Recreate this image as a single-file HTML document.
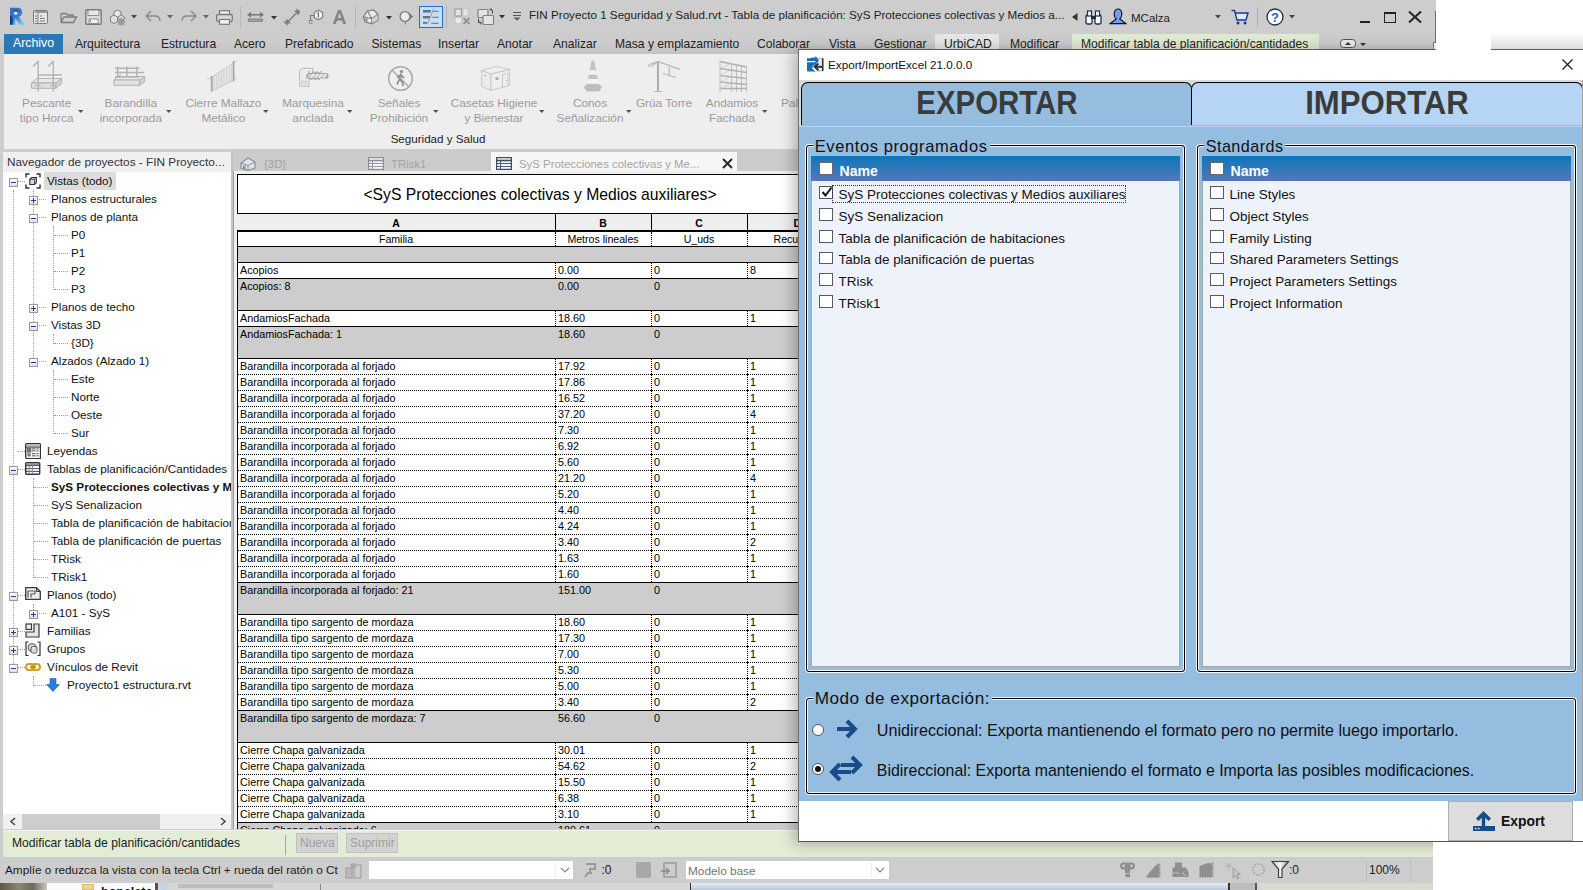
<!DOCTYPE html>
<html><head><meta charset="utf-8"><title>Revit - Export/ImportExcel</title>
<style>
html,body{margin:0;padding:0;}
body{width:1583px;height:890px;overflow:hidden;position:relative;background:#fff;font-family:"Liberation Sans",sans-serif;}
body div{position:absolute;box-sizing:border-box;}
.t{white-space:nowrap;}
</style></head><body>

<div style="left:0px;top:0px;width:1436px;height:884px;background:#cdcdcd;"></div>
<svg style="position:absolute;left:9px;top:7px;" width="17" height="19" viewBox="0 0 17 19"><defs><linearGradient id="rg" x1="0" y1="0" x2="0.6" y2="1"><stop offset="0" stop-color="#2a70c8"/><stop offset="0.55" stop-color="#2f78cc"/><stop offset="1" stop-color="#6cc4ee"/></linearGradient></defs><path d="M1 0.7 H8.8 C12 0.7 13 3 13 5.4 C13 7.8 11.8 9.2 10 9.8 L15.8 17.8 H10.3 L6.2 11.2 V17.8 H1 Z" fill="url(#rg)"/><path d="M1 8 L3.6 10.5 V17.8 H1 Z" fill="#1c3a7e"/><circle cx="6.7" cy="6" r="2" fill="#d8d8d8"/><path d="M4.8 4.6 C5.6 3.6 8 3.4 8.8 4.6" stroke="#1c2f66" stroke-width="1.2" fill="none"/></svg>
<svg style="position:absolute;left:33px;top:10px;" width="15" height="14" viewBox="0 0 15 14"><rect x="0.5" y="0.5" width="14" height="13" rx="1" fill="#e6e6e6" stroke="#7a7a7a"/><rect x="1" y="1" width="13" height="2" fill="#9a9a9a"/><rect x="1.5" y="1.2" width="1.5" height="1.5" fill="#bde"/><path d="M5 3 V13" stroke="#7a7a7a"/><path d="M2 6h2M2 8.5h2M2 11h2M7 6h2M7 8.5h5M7 11h5" stroke="#7a7a7a"/></svg>
<svg style="position:absolute;left:60px;top:11px;" width="18" height="13" viewBox="0 0 18 13"><path d="M1 2.5 V11.5 L4 6 H16.5 L13.5 11.5 H1 M1 2.5 H6 L7.5 4 H13 V6" fill="none" stroke="#7a7a7a" stroke-width="1.3"/></svg>
<svg style="position:absolute;left:85px;top:9px;" width="17" height="16" viewBox="0 0 17 16"><rect x="0.8" y="0.8" width="15.4" height="14.4" rx="1" fill="#dcdcdc" stroke="#7a7a7a" stroke-width="1.4"/><rect x="3" y="1" width="11" height="5.5" fill="#e8e8e8" stroke="#7a7a7a" stroke-width="0.8"/><rect x="4" y="10" width="9" height="4.5" fill="#f2f2f2" stroke="#7a7a7a" stroke-width="0.8"/><rect x="5" y="11" width="1" height="2" fill="#7a7a7a"/></svg>
<svg style="position:absolute;left:109px;top:9px;" width="17" height="17" viewBox="0 0 17 17"><path d="M5 3 L8.5 1 L12 3 V7 L8.5 9 L5 7 Z" fill="#e8e8e8" stroke="#7c7c7c" stroke-width="1"/><path d="M1.5 8 L5 6 L8.5 8 V12.5 L5 14.5 L1.5 12.5 Z" fill="#e0e0e0" stroke="#7c7c7c" stroke-width="1"/><path d="M8.5 8 L12 6 L15.5 8 V10" fill="#e0e0e0" stroke="#7c7c7c" stroke-width="1"/><circle cx="12.3" cy="12.8" r="3.3" fill="#9a9a9a"/><circle cx="12.3" cy="12.8" r="1.2" fill="#cfcfcf"/><path d="M12.3 8.6 V17 M8.1 12.8 H16.5 M9.3 9.8 L15.3 15.8 M15.3 9.8 L9.3 15.8" stroke="#9a9a9a" stroke-width="1.1"/></svg>
<svg style="position:absolute;left:131px;top:15px;" width="7" height="4" viewBox="0 0 7 4"><path d="M0 0 H6 L3 3.5 Z" fill="#444"/></svg>
<svg style="position:absolute;left:145px;top:10px;" width="16" height="13" viewBox="0 0 16 13"><path d="M6 1 L1 6 L6 11 M1.5 6 H10 C13 6 15 8 15 11" fill="none" stroke="#8a8a8a" stroke-width="1.4"/></svg>
<svg style="position:absolute;left:167px;top:15px;" width="7" height="4" viewBox="0 0 7 4"><path d="M0 0 H6 L3 3.5 Z" fill="#666"/></svg>
<svg style="position:absolute;left:181px;top:10px;" width="16" height="13" viewBox="0 0 16 13"><path d="M10 1 L15 6 L10 11 M14.5 6 H6 C3 6 1 8 1 11" fill="none" stroke="#8a8a8a" stroke-width="1.4"/></svg>
<svg style="position:absolute;left:203px;top:15px;" width="7" height="4" viewBox="0 0 7 4"><path d="M0 0 H6 L3 3.5 Z" fill="#666"/></svg>
<svg style="position:absolute;left:216px;top:10px;" width="17" height="15" viewBox="0 0 17 15"><rect x="3.5" y="0.7" width="10" height="4" fill="#eee" stroke="#7a7a7a" stroke-width="1.2"/><rect x="0.7" y="4.5" width="15.6" height="7" rx="1.5" fill="#d8d8d8" stroke="#7a7a7a" stroke-width="1.3"/><rect x="3.5" y="9.5" width="10" height="4.8" fill="#f2f2f2" stroke="#7a7a7a" stroke-width="1.2"/></svg>
<div style="left:240px;top:6px;width:1px;height:22px;background:#b8b8b8;"></div>
<svg style="position:absolute;left:246px;top:9px;" width="20" height="15" viewBox="0 0 20 15"><path d="M2.5 5.8 H16.5" stroke="#7c7c7c" stroke-width="1.6"/><path d="M1 5.8 L5 2.8 V8.8 Z M18 5.8 L14 2.8 V8.8 Z" fill="#7c7c7c"/><rect x="1.8" y="9.6" width="15.2" height="3.3" rx="0.8" fill="#8a8a8a"/><path d="M3.5 11.3 H15.5" stroke="#d8d8d8" stroke-width="0.9" stroke-dasharray="1 1"/></svg>
<svg style="position:absolute;left:271px;top:16px;" width="7" height="4" viewBox="0 0 7 4"><path d="M0 0 H6 L3 3.5 Z" fill="#333"/></svg>
<svg style="position:absolute;left:283px;top:8px;" width="18" height="18" viewBox="0 0 18 18"><path d="M4 14.5 L15 3.5" stroke="#7c7c7c" stroke-width="1.5"/><path d="M2.5 16 L3.2 10.5 L8 15.3 Z M16.5 2 L15.8 7.5 L11 2.7 Z" fill="#7c7c7c"/><path d="M0.8 13.3 L4.8 17.2 M13.3 0.8 L17.2 4.8" stroke="#7c7c7c" stroke-width="1.1"/></svg>
<svg style="position:absolute;left:308px;top:9px;" width="16" height="15" viewBox="0 0 16 15"><path d="M10.4 1.2 L14.6 3.6 V8.4 L10.4 10.8 L6.2 8.4 V3.6 Z" fill="#f2f2f2" stroke="#7c7c7c" stroke-width="1.1"/><path d="M10.4 3.4 V8.6 M9.3 4.4 L10.4 3.4" stroke="#555" stroke-width="1"/><path d="M6.2 6.5 H2.5 V11.5" fill="none" stroke="#7c7c7c" stroke-width="1.1"/><rect x="1.3" y="11.5" width="2.6" height="2.6" fill="#f2f2f2" stroke="#7c7c7c" stroke-width="0.9"/></svg>
<svg style="position:absolute;left:332px;top:9px;" width="15" height="16" viewBox="0 0 15 16"><path d="M0.8 15 L6 1 H9 L14.2 15 H11.2 L10 11.5 H5 L3.8 15 Z M5.8 9 H9.2 L7.5 3.8 Z" fill="#858585"/></svg>
<div style="left:355px;top:6px;width:1px;height:22px;background:#b8b8b8;"></div>
<svg style="position:absolute;left:362px;top:9px;" width="17" height="16" viewBox="0 0 17 16"><path d="M1.2 7.8 L5.5 2 L11.5 0.8 L16 5.2 V11.5 L9.8 14.8 L3.2 12.8 Z" fill="#e8e8e8" stroke="#7c7c7c" stroke-width="1.2"/><path d="M1.2 7.8 L9.8 9.6 L16 5.2 M5.5 2 L9.8 9.6 V14.8" fill="none" stroke="#7c7c7c" stroke-width="1.1"/><path d="M3.2 9 V12.8 L5.6 13.4 V9.6 Z" fill="#9a9a9a"/><path d="M10.3 10 L15.5 6 V11.2 L10.3 14 Z" fill="#cfcfcf"/></svg>
<svg style="position:absolute;left:386px;top:16px;" width="7" height="4" viewBox="0 0 7 4"><path d="M0 0 H6 L3 3.5 Z" fill="#333"/></svg>
<svg style="position:absolute;left:398px;top:9px;" width="16" height="16" viewBox="0 0 16 16"><path d="M11 3.8 L15.2 7.5 L11 11.2 Z" fill="#7c7c7c"/><circle cx="7" cy="7.5" r="4.9" fill="#ececec" stroke="#7c7c7c" stroke-width="1.3"/><path d="M7.3 12.5 V15.5" stroke="#7c7c7c" stroke-width="1.1"/></svg>
<div style="left:419px;top:6px;width:24px;height:22px;background:#c6def6;border:1.5px solid #1f6fd6;"></div>
<svg style="position:absolute;left:422px;top:8px;" width="18" height="17" viewBox="0 0 18 17"><path d="M1 2 H9 L8.5 4.6 H1 Z M1 8 H8 L7.5 10.4 H1 Z M1 14 H5 V15.8 H1 Z" fill="#65707e"/><path d="M11.3 3.2 H16.5 M10.3 9.2 H16.5 M9.3 15.2 H16.5" stroke="#65707e" stroke-width="1.1"/><path d="M5.5 16.5 L11.5 1" stroke="#8a93a0" stroke-width="0.9"/></svg>
<div style="left:446px;top:6px;width:1px;height:22px;background:#b8b8b8;"></div>
<svg style="position:absolute;left:454px;top:8px;" width="17" height="18" viewBox="0 0 17 18"><rect x="1" y="1" width="6.5" height="7" fill="#e4e4e4" stroke="#9a9a9a" stroke-width="1.1"/><rect x="9" y="1" width="5" height="7" fill="#e8e8e8" stroke="#c4c4c4" stroke-width="0.9"/><rect x="1" y="9.5" width="6.5" height="6" fill="#e8e8e8" stroke="#c4c4c4" stroke-width="0.9"/><path d="M9.5 10 L15.5 16 M15.5 10 L9.5 16" stroke="#8a8a8a" stroke-width="1.7"/></svg>
<svg style="position:absolute;left:477px;top:8px;" width="18" height="18" viewBox="0 0 18 18"><rect x="1" y="1.5" width="10" height="8" rx="1" fill="#e4e4e4" stroke="#808080" stroke-width="1.2"/><rect x="6" y="7.5" width="10.5" height="9" rx="1" fill="#e4e4e4" stroke="#808080" stroke-width="1.2"/><path d="M13.5 0.8 L15.5 2.8 V5.5 M12.5 2 L14.3 0.8 L14.8 2.8" fill="none" stroke="#444" stroke-width="1"/><path d="M1.5 11 V14.5 L4 15 M3 13.5 L4.5 15 L3 16.3" fill="none" stroke="#444" stroke-width="1"/></svg>
<svg style="position:absolute;left:499px;top:15px;" width="7" height="4" viewBox="0 0 7 4"><path d="M0 0 H6 L3 3.5 Z" fill="#333"/></svg>
<svg style="position:absolute;left:512px;top:11px;" width="10" height="10" viewBox="0 0 10 10"><path d="M1 1.5 H9 M1 4.5 H9" stroke="#555" stroke-width="1.2"/><path d="M1.5 6.5 H8.5 L5 9.5 Z" fill="#555"/></svg>
<div class="t" style="left:529px;top:7.98px;font-size:11.65px;line-height:14.56px;color:#222;font-weight:normal;">FIN Proyecto 1 Seguridad y Salud.rvt - Tabla de planificación: SyS Protecciones colectivas y Medios a...</div>
<svg style="position:absolute;left:1072px;top:13px;" width="6" height="8" viewBox="0 0 6 8"><path d="M5.5 0 V8 L0 4 Z" fill="#333"/></svg>
<svg style="position:absolute;left:1085px;top:10px;" width="17" height="15" viewBox="0 0 17 15"><rect x="1" y="5" width="6" height="9" rx="1.5" fill="#fff" stroke="#1a2a50" stroke-width="1.3"/><rect x="10" y="5" width="6" height="9" rx="1.5" fill="#fff" stroke="#1a2a50" stroke-width="1.3"/><rect x="2.5" y="1" width="4" height="5" fill="#fff" stroke="#1a2a50" stroke-width="1.2"/><rect x="10.5" y="1" width="4" height="5" fill="#fff" stroke="#1a2a50" stroke-width="1.2"/><rect x="6" y="6" width="5" height="3" fill="#1a2a50"/></svg>
<svg style="position:absolute;left:1109px;top:8px;" width="18" height="17" viewBox="0 0 18 17"><path d="M9 1 C11.8 1 12.8 3.5 12.8 6 C12.8 8.8 11.5 10.5 10.8 11 L16.8 15.6 H1.2 L7.2 11 C6.5 10.5 5.2 8.8 5.2 6 C5.2 3.5 6.2 1 9 1 Z" fill="#6f9ef2" stroke="#111" stroke-width="1.1"/></svg>
<div class="t" style="left:1131px;top:10.83px;font-size:11.5px;line-height:14.38px;color:#222;font-weight:normal;">MCalza</div>
<svg style="position:absolute;left:1215px;top:15px;" width="7" height="4" viewBox="0 0 7 4"><path d="M0 0 H6 L3 3.5 Z" fill="#444"/></svg>
<svg style="position:absolute;left:1231px;top:9px;" width="18" height="16" viewBox="0 0 18 16"><path d="M0.5 1.5 H3.5 L6 11 H15 L17 4 H4.5" fill="#dde8ff" stroke="#1a3a90" stroke-width="1.4"/><circle cx="7" cy="14" r="1.5" fill="#1a3a90"/><circle cx="14" cy="14" r="1.5" fill="#1a3a90"/></svg>
<div style="left:1257px;top:7px;width:1px;height:20px;background:#b0b0b0;"></div>
<svg style="position:absolute;left:1266px;top:8px;" width="18" height="18" viewBox="0 0 18 18"><circle cx="9" cy="9" r="8" fill="#fff" stroke="#1a2a50" stroke-width="1.3"/><text x="9" y="13.5" text-anchor="middle" font-size="13" font-weight="bold" fill="#2a5acc" font-family="Liberation Sans">?</text></svg>
<svg style="position:absolute;left:1289px;top:15px;" width="7" height="4" viewBox="0 0 7 4"><path d="M0 0 H6 L3 3.5 Z" fill="#444"/></svg>
<div style="left:1360px;top:21px;width:10px;height:2px;background:#222;"></div>
<div style="left:1384px;top:12px;width:12px;height:11px;border:1.5px solid #222;border-top-width:2px;"></div>
<svg style="position:absolute;left:1408px;top:11px;" width="14" height="12" viewBox="0 0 14 12"><path d="M1 0.5 L13 11.5 M13 0.5 L1 11.5" stroke="#222" stroke-width="2"/></svg>
<div style="left:0px;top:30px;width:1436px;height:24px;background:linear-gradient(#cdcdcd,#cccccc 50%,#c3c3c3);"></div>
<div style="left:4px;top:34px;width:59px;height:20px;background:#2b78b7;"></div>
<div class="t" style="left:13px;top:36.35px;font-size:12.3px;line-height:15.38px;color:#fff;font-weight:normal;">Archivo</div>
<div style="left:935px;top:34px;width:64px;height:20px;background:#e6e6e6;"></div>
<div style="left:1072px;top:34px;width:247px;height:20px;background:#dfead2;"></div>
<div class="t" style="left:75px;top:36.55px;font-size:12.1px;line-height:15.12px;color:#222;font-weight:normal;width:67.30000000000001px;">Arquitectura</div>
<div class="t" style="left:161px;top:36.55px;font-size:12.1px;line-height:15.12px;color:#222;font-weight:normal;width:54.30000000000001px;">Estructura</div>
<div class="t" style="left:234px;top:36.55px;font-size:12.1px;line-height:15.12px;color:#222;font-weight:normal;width:32.60000000000002px;">Acero</div>
<div class="t" style="left:285px;top:36.55px;font-size:12.1px;line-height:15.12px;color:#222;font-weight:normal;width:68.80000000000001px;">Prefabricado</div>
<div class="t" style="left:371.5px;top:36.55px;font-size:12.1px;line-height:15.12px;color:#222;font-weight:normal;width:48.0px;">Sistemas</div>
<div class="t" style="left:438px;top:36.55px;font-size:12.1px;line-height:15.12px;color:#222;font-weight:normal;width:40.69999999999999px;">Insertar</div>
<div class="t" style="left:497px;top:36.55px;font-size:12.1px;line-height:15.12px;color:#222;font-weight:normal;width:37.799999999999955px;">Anotar</div>
<div class="t" style="left:553px;top:36.55px;font-size:12.1px;line-height:15.12px;color:#222;font-weight:normal;width:43.60000000000002px;">Analizar</div>
<div class="t" style="left:615px;top:36.55px;font-size:12.1px;line-height:15.12px;color:#222;font-weight:normal;width:123.29999999999995px;">Masa y emplazamiento</div>
<div class="t" style="left:757px;top:36.55px;font-size:12.1px;line-height:15.12px;color:#222;font-weight:normal;width:53.799999999999955px;">Colaborar</div>
<div class="t" style="left:829px;top:36.55px;font-size:12.1px;line-height:15.12px;color:#222;font-weight:normal;width:26.799999999999955px;">Vista</div>
<div class="t" style="left:874px;top:36.55px;font-size:12.1px;line-height:15.12px;color:#222;font-weight:normal;width:52px;">Gestionar</div>
<div class="t" style="left:944px;top:36.55px;font-size:12.1px;line-height:15.12px;color:#222;font-weight:normal;width:47.5px;">UrbiCAD</div>
<div class="t" style="left:1010px;top:36.55px;font-size:12.1px;line-height:15.12px;color:#222;font-weight:normal;width:52.799999999999955px;">Modificar</div>
<div class="t" style="left:1081px;top:36.55px;font-size:12.1px;line-height:15.12px;color:#222;font-weight:normal;width:231px;">Modificar tabla de planificación/cantidades</div>
<svg style="position:absolute;left:1340px;top:39px;" width="28" height="10" viewBox="0 0 28 10"><rect x="0.5" y="0.5" width="15" height="8" rx="3" fill="#e8e8e8" stroke="#555"/><path d="M5 6 L8 3 L11 6 Z" fill="#333"/><path d="M20 4 H26 L23 7 Z" fill="#333"/></svg>
<div style="left:4px;top:54px;width:1432px;height:95px;background:#eeeeee;"></div>
<div class="t" style="left:-253.4px;width:600px;text-align:center;top:95.94px;font-size:11.8px;line-height:14.75px;color:#9b9b9b;font-weight:normal;">Pescante</div>
<div class="t" style="left:-253.4px;width:600px;text-align:center;top:110.54px;font-size:11.8px;line-height:14.75px;color:#9b9b9b;font-weight:normal;">tipo Horca</div>
<svg style="position:absolute;left:78px;top:110px;" width="6" height="4" viewBox="0 0 6 4"><path d="M0 0 H5.5 L2.75 3 Z" fill="#505050"/></svg>
<div class="t" style="left:-169.2px;width:600px;text-align:center;top:95.94px;font-size:11.8px;line-height:14.75px;color:#9b9b9b;font-weight:normal;">Barandilla</div>
<div class="t" style="left:-169.2px;width:600px;text-align:center;top:110.54px;font-size:11.8px;line-height:14.75px;color:#9b9b9b;font-weight:normal;">incorporada</div>
<svg style="position:absolute;left:166px;top:110px;" width="6" height="4" viewBox="0 0 6 4"><path d="M0 0 H5.5 L2.75 3 Z" fill="#505050"/></svg>
<div class="t" style="left:-76.6px;width:600px;text-align:center;top:95.94px;font-size:11.8px;line-height:14.75px;color:#9b9b9b;font-weight:normal;">Cierre Mallazo</div>
<div class="t" style="left:-76.6px;width:600px;text-align:center;top:110.54px;font-size:11.8px;line-height:14.75px;color:#9b9b9b;font-weight:normal;">Metálico</div>
<svg style="position:absolute;left:263px;top:110px;" width="6" height="4" viewBox="0 0 6 4"><path d="M0 0 H5.5 L2.75 3 Z" fill="#505050"/></svg>
<div class="t" style="left:13px;width:600px;text-align:center;top:95.94px;font-size:11.8px;line-height:14.75px;color:#9b9b9b;font-weight:normal;">Marquesina</div>
<div class="t" style="left:13px;width:600px;text-align:center;top:110.54px;font-size:11.8px;line-height:14.75px;color:#9b9b9b;font-weight:normal;">anclada</div>
<svg style="position:absolute;left:347px;top:110px;" width="6" height="4" viewBox="0 0 6 4"><path d="M0 0 H5.5 L2.75 3 Z" fill="#505050"/></svg>
<div class="t" style="left:99px;width:600px;text-align:center;top:95.94px;font-size:11.8px;line-height:14.75px;color:#9b9b9b;font-weight:normal;">Señales</div>
<div class="t" style="left:99px;width:600px;text-align:center;top:110.54px;font-size:11.8px;line-height:14.75px;color:#9b9b9b;font-weight:normal;">Prohibición</div>
<svg style="position:absolute;left:433px;top:110px;" width="6" height="4" viewBox="0 0 6 4"><path d="M0 0 H5.5 L2.75 3 Z" fill="#505050"/></svg>
<div class="t" style="left:194px;width:600px;text-align:center;top:95.94px;font-size:11.8px;line-height:14.75px;color:#9b9b9b;font-weight:normal;">Casetas Higiene</div>
<div class="t" style="left:194px;width:600px;text-align:center;top:110.54px;font-size:11.8px;line-height:14.75px;color:#9b9b9b;font-weight:normal;">y Bienestar</div>
<svg style="position:absolute;left:539px;top:110px;" width="6" height="4" viewBox="0 0 6 4"><path d="M0 0 H5.5 L2.75 3 Z" fill="#505050"/></svg>
<div class="t" style="left:290px;width:600px;text-align:center;top:95.94px;font-size:11.8px;line-height:14.75px;color:#9b9b9b;font-weight:normal;">Conos</div>
<div class="t" style="left:290px;width:600px;text-align:center;top:110.54px;font-size:11.8px;line-height:14.75px;color:#9b9b9b;font-weight:normal;">Señalización</div>
<svg style="position:absolute;left:626px;top:110px;" width="6" height="4" viewBox="0 0 6 4"><path d="M0 0 H5.5 L2.75 3 Z" fill="#505050"/></svg>
<div class="t" style="left:364px;width:600px;text-align:center;top:95.94px;font-size:11.8px;line-height:14.75px;color:#9b9b9b;font-weight:normal;">Grúa Torre</div>
<div class="t" style="left:432px;width:600px;text-align:center;top:95.94px;font-size:11.8px;line-height:14.75px;color:#9b9b9b;font-weight:normal;">Andamios</div>
<div class="t" style="left:432px;width:600px;text-align:center;top:110.54px;font-size:11.8px;line-height:14.75px;color:#9b9b9b;font-weight:normal;">Fachada</div>
<svg style="position:absolute;left:762px;top:110px;" width="6" height="4" viewBox="0 0 6 4"><path d="M0 0 H5.5 L2.75 3 Z" fill="#505050"/></svg>
<div class="t" style="left:781px;top:95.94px;font-size:11.8px;line-height:14.75px;color:#9b9b9b;font-weight:normal;">Pal</div>
<div class="t" style="left:138px;width:600px;text-align:center;top:132.23px;font-size:11.6px;line-height:14.5px;color:#222;font-weight:normal;">Seguridad y Salud</div>
<svg style="position:absolute;left:30px;top:60px;" width="34" height="33" viewBox="0 0 34 33"><path d="M1.4 23 L7 18.5 H31.7 L26 23 Z" fill="#e9e9e9" stroke="#b3b3b3"/><path d="M1.4 23 H26 V28.3 H1.4 Z" fill="#dedede" stroke="#b3b3b3"/><path d="M26 23 L31.7 18.5 V23.5 L26 28.3 Z" fill="#d2d2d2" stroke="#b3b3b3"/><path d="M8.2 1 V31.5 M23.3 1 V31.5 M8.2 1 L3 6.4 M23.3 1 L18 6.4 M8.2 15 H31.7" stroke="#b3b3b3" stroke-width="1.4" fill="none"/><path d="M5 26.5 L8.2 24.5 L11 26.5 M20 26.5 L23.3 24.5 L26 26.5" stroke="#b3b3b3" fill="none"/></svg>
<svg style="position:absolute;left:113px;top:66px;" width="33" height="21" viewBox="0 0 33 21"><path d="M1 14 L5 10.5 H31.7 L26.7 14 Z" fill="#ececec" stroke="#b3b3b3"/><path d="M1 14 H26.7 V19.3 H1 Z" fill="#e2e2e2" stroke="#b3b3b3"/><path d="M26.7 14 L31.7 10.5 V15.5 L26.7 19.3 Z" fill="#d4d4d4" stroke="#b3b3b3"/><path d="M2 2.3 H26.7 M2 6.4 H31 M2 11 H26.7 M4.7 0.5 V11.5 M13.8 0.5 V11.5 M23.7 0.5 V11.5" stroke="#b3b3b3" stroke-width="1.5" fill="none"/><path d="M4.7 11 L8 8" stroke="#b3b3b3"/></svg>
<svg style="position:absolute;left:207px;top:60px;" width="32" height="33" viewBox="0 0 32 33"><path d="M4.7 17 L26.6 3 V21 L4.7 31.4 Z" fill="#e4e4e4"/><path d="M7 15.5 V30.3 M9.5 14 V29 M12 12.3 V27.8 M14.5 10.7 V26.6 M17 9.2 V25.4 M19.5 7.6 V24.2 M22 6 V23 M24.5 4.4 V21.8" stroke="#cfcfcf" stroke-width="0.8"/><path d="M0 18.5 H4.7 M4.7 17 L30 0.5 M4.7 31.4 L30 18" stroke="#c8c8c8" stroke-width="0.9" fill="none"/><path d="M4.7 16 V31.5 M26.6 1 V21.5" stroke="#a8a8a8" stroke-width="1.8"/></svg>
<svg style="position:absolute;left:299px;top:67px;" width="31" height="21" viewBox="0 0 31 21"><path d="M0.5 4 L3 1.3 H14 V5.5 H20.5 V12 H10 V19.5 H0.5 Z" fill="#ececec" stroke="#b3b3b3" stroke-width="0.9"/><path d="M0.5 12.5 H8 V19.5 H0.5 Z" fill="#dcdcdc"/><path d="M8 11 H27 C29.5 11 29.5 6.5 27 6.5 H10 L8 8 Z" fill="#d0d0d0" stroke="#9a9a9a" stroke-width="1.2"/><path d="M12 11 L15 6.5 M16 11 L19 6.5 M20 11 L23 6.5 M24 11 L27 6.5" stroke="#f4f4f4" stroke-width="1.3"/><path d="M10 4 V6 M14 4 V6 M18 4 V6 M22 4 V6 M12 11 V13 M16 11 V13 M20 11 V13" stroke="#9a9a9a" stroke-width="1"/></svg>
<svg style="position:absolute;left:387px;top:65px;" width="27" height="27" viewBox="0 0 27 27"><circle cx="13.5" cy="13.5" r="11.8" fill="none" stroke="#a9a9a9" stroke-width="1.6"/><path d="M5.5 5.5 L21.5 21.5" stroke="#a9a9a9" stroke-width="1.4"/><circle cx="14.5" cy="6.5" r="1.6" fill="#8f8f8f"/><path d="M14 8.5 L12.5 14 L10 19.5 M12.5 14 L15.5 17 L16 21 M13.5 10 L10 12.5 M13.5 10 L17 13" stroke="#8f8f8f" stroke-width="1.8" fill="none"/></svg>
<svg style="position:absolute;left:481px;top:66px;" width="30" height="25" viewBox="0 0 30 25"><path d="M0.7 4.5 L15 0.5 L28.7 3.5 L10 8 Z" fill="#f0f0f0" stroke="#c4c4c4" stroke-width="0.9"/><path d="M0.7 4.5 V20.5 L10 24.3 V8 Z" fill="#ebebeb" stroke="#c4c4c4" stroke-width="0.9"/><path d="M10 8 L28.7 3.5 V19.5 L10 24.3 Z" fill="#eeeeee" stroke="#c4c4c4" stroke-width="0.9"/><path d="M21.5 8.5 V21 M27 7.5 V19.5 M21.5 8.5 L27 7.3" stroke="#c4c4c4" stroke-width="0.9" fill="none"/><rect x="14.5" y="11" width="3" height="3" fill="#b0b0b0"/><rect x="3.5" y="9" width="1.3" height="1.3" fill="#999"/><rect x="25" y="14" width="1" height="1" fill="#999"/></svg>
<svg style="position:absolute;left:583px;top:60px;" width="20" height="33" viewBox="0 0 20 33"><path d="M8.6 0.5 H11.2 L16 25 H3.8 Z" fill="#c2c2c2"/><path d="M6.5 10.2 H13.3 L14.2 14.7 H5.6 Z M4.8 19 H15 L15.9 23.8 H3.9 Z" fill="#f4f4f4"/><path d="M0.8 27 L3.5 24.5 H16.3 L19 27 L16 31.5 H3.8 Z" fill="#bdbdbd"/></svg>
<svg style="position:absolute;left:647px;top:60px;" width="34" height="33" viewBox="0 0 34 33"><path d="M10.9 1.5 V31.5 M7 31.5 H15 M1.8 4.8 L10.9 1.5 L32.8 9.4 M1.8 4.8 V7 M10.9 1.5 L4 6.5 M22.2 7 V16.5 M16 13.5 L29 17.5" stroke="#b8b8b8" stroke-width="1.2" fill="none"/><path d="M10.9 2 V31" stroke="#a9a9a9" stroke-width="1.8"/></svg>
<svg style="position:absolute;left:719px;top:60px;" width="29" height="33" viewBox="0 0 29 33"><path d="M1 1 V32 M12.5 3 V32 M17.5 4 V32 M22.5 5 V32 M27.5 6 V32" stroke="#c2c2c2" stroke-width="1.1" fill="none"/><path d="M1 1.5 L27.5 7 M1 8.5 L27.5 12.5 M1 15.5 L27.5 18.5 M1 22 L27.5 24.5 M1 28.5 H27.5" stroke="#b0b0b0" stroke-width="1.6" fill="none"/><path d="M1 8 L12.5 3.5 M1 15 L12.5 9.5 M1 22 L12.5 16 M1 28.5 L12.5 23" stroke="#cccccc" stroke-width="0.8"/></svg>
<div style="left:3px;top:152px;width:228px;height:677px;background:#fff;"></div>
<div style="left:3px;top:152px;width:228px;height:20px;background:#f0f0f0;"></div>
<div class="t" style="left:7px;top:155.04px;font-size:11.8px;line-height:14.75px;color:#333;font-weight:normal;">Navegador de proyectos - FIN Proyecto...</div>
<div style="left:3px;top:172px;width:228px;height:642px;overflow:hidden;">
<div style="left:10px;top:18px;width:1px;height:478px;border-left:1px dotted #a0a0a0;"></div>
<div style="left:30px;top:18px;width:1px;height:172px;border-left:1px dotted #a0a0a0;"></div>
<div style="left:50px;top:54px;width:1px;height:64px;border-left:1px dotted #a0a0a0;"></div>
<div style="left:50px;top:162px;width:1px;height:10px;border-left:1px dotted #a0a0a0;"></div>
<div style="left:50px;top:198px;width:1px;height:64px;border-left:1px dotted #a0a0a0;"></div>
<div style="left:30px;top:306px;width:1px;height:100px;border-left:1px dotted #a0a0a0;"></div>
<div style="left:30px;top:432px;width:1px;height:10px;border-left:1px dotted #a0a0a0;"></div>
<div style="left:30px;top:504px;width:1px;height:10px;border-left:1px dotted #a0a0a0;"></div>
<div style="left:14px;top:9px;width:8px;height:1px;border-top:1px dotted #a0a0a0;"></div>
<div style="left:6px;top:6px;width:9px;height:9px;background:linear-gradient(#fff,#e0e0e0);border:1px solid #9a9a9a;"></div>
<div style="left:8px;top:10px;width:5px;height:1px;background:#2a3a8a;"></div>
<div style="left:41px;top:0px;width:72px;height:18px;background:#dcdcdc;"></div>
<div class="t" style="left:44px;top:0px;height:18px;line-height:18px;font-size:11.7px;color:#111;font-weight:normal;">Vistas (todo)</div>
<svg style="position:absolute;left:22px;top:1px;" width="16" height="16" viewBox="0 0 16 16"><path d="M1 4.5 V1 H4.5 M11.5 1 H15 V4.5 M15 11.5 V15 H11.5 M4.5 15 H1 V11.5" fill="none" stroke="#2a2f3a" stroke-width="1.4"/><path d="M4.8 6.3 L6.5 4.5 H11.3 V9.8 L9.5 11.5 H4.8 Z" fill="#d6dae4" stroke="#2a2f3a" stroke-width="1.1"/><path d="M4.8 6.3 H9.5 V11.5 M9.5 6.3 L11.3 4.5" fill="none" stroke="#2a2f3a" stroke-width="0.8"/></svg>
<div style="left:31px;top:27px;width:12px;height:1px;border-top:1px dotted #a0a0a0;"></div>
<div style="left:26px;top:24px;width:9px;height:9px;background:linear-gradient(#fff,#e0e0e0);border:1px solid #9a9a9a;"></div>
<div style="left:28px;top:28px;width:5px;height:1px;background:#2a3a8a;"></div>
<div style="left:30px;top:26px;width:1px;height:5px;background:#2a3a8a;"></div>
<div class="t" style="left:48px;top:18px;height:18px;line-height:18px;font-size:11.7px;color:#111;font-weight:normal;">Planos estructurales</div>
<div style="left:31px;top:45px;width:12px;height:1px;border-top:1px dotted #a0a0a0;"></div>
<div style="left:26px;top:42px;width:9px;height:9px;background:linear-gradient(#fff,#e0e0e0);border:1px solid #9a9a9a;"></div>
<div style="left:28px;top:46px;width:5px;height:1px;background:#2a3a8a;"></div>
<div class="t" style="left:48px;top:36px;height:18px;line-height:18px;font-size:11.7px;color:#111;font-weight:normal;">Planos de planta</div>
<div style="left:51px;top:63px;width:14px;height:1px;border-top:1px dotted #a0a0a0;"></div>
<div class="t" style="left:68px;top:54px;height:18px;line-height:18px;font-size:11.7px;color:#111;font-weight:normal;">P0</div>
<div style="left:51px;top:81px;width:14px;height:1px;border-top:1px dotted #a0a0a0;"></div>
<div class="t" style="left:68px;top:72px;height:18px;line-height:18px;font-size:11.7px;color:#111;font-weight:normal;">P1</div>
<div style="left:51px;top:99px;width:14px;height:1px;border-top:1px dotted #a0a0a0;"></div>
<div class="t" style="left:68px;top:90px;height:18px;line-height:18px;font-size:11.7px;color:#111;font-weight:normal;">P2</div>
<div style="left:51px;top:117px;width:14px;height:1px;border-top:1px dotted #a0a0a0;"></div>
<div class="t" style="left:68px;top:108px;height:18px;line-height:18px;font-size:11.7px;color:#111;font-weight:normal;">P3</div>
<div style="left:31px;top:135px;width:12px;height:1px;border-top:1px dotted #a0a0a0;"></div>
<div style="left:26px;top:132px;width:9px;height:9px;background:linear-gradient(#fff,#e0e0e0);border:1px solid #9a9a9a;"></div>
<div style="left:28px;top:136px;width:5px;height:1px;background:#2a3a8a;"></div>
<div style="left:30px;top:134px;width:1px;height:5px;background:#2a3a8a;"></div>
<div class="t" style="left:48px;top:126px;height:18px;line-height:18px;font-size:11.7px;color:#111;font-weight:normal;">Planos de techo</div>
<div style="left:31px;top:153px;width:12px;height:1px;border-top:1px dotted #a0a0a0;"></div>
<div style="left:26px;top:150px;width:9px;height:9px;background:linear-gradient(#fff,#e0e0e0);border:1px solid #9a9a9a;"></div>
<div style="left:28px;top:154px;width:5px;height:1px;background:#2a3a8a;"></div>
<div class="t" style="left:48px;top:144px;height:18px;line-height:18px;font-size:11.7px;color:#111;font-weight:normal;">Vistas 3D</div>
<div style="left:51px;top:171px;width:14px;height:1px;border-top:1px dotted #a0a0a0;"></div>
<div class="t" style="left:68px;top:162px;height:18px;line-height:18px;font-size:11.7px;color:#111;font-weight:normal;">{3D}</div>
<div style="left:31px;top:189px;width:12px;height:1px;border-top:1px dotted #a0a0a0;"></div>
<div style="left:26px;top:186px;width:9px;height:9px;background:linear-gradient(#fff,#e0e0e0);border:1px solid #9a9a9a;"></div>
<div style="left:28px;top:190px;width:5px;height:1px;background:#2a3a8a;"></div>
<div class="t" style="left:48px;top:180px;height:18px;line-height:18px;font-size:11.7px;color:#111;font-weight:normal;">Alzados (Alzado 1)</div>
<div style="left:51px;top:207px;width:14px;height:1px;border-top:1px dotted #a0a0a0;"></div>
<div class="t" style="left:68px;top:198px;height:18px;line-height:18px;font-size:11.7px;color:#111;font-weight:normal;">Este</div>
<div style="left:51px;top:225px;width:14px;height:1px;border-top:1px dotted #a0a0a0;"></div>
<div class="t" style="left:68px;top:216px;height:18px;line-height:18px;font-size:11.7px;color:#111;font-weight:normal;">Norte</div>
<div style="left:51px;top:243px;width:14px;height:1px;border-top:1px dotted #a0a0a0;"></div>
<div class="t" style="left:68px;top:234px;height:18px;line-height:18px;font-size:11.7px;color:#111;font-weight:normal;">Oeste</div>
<div style="left:51px;top:261px;width:14px;height:1px;border-top:1px dotted #a0a0a0;"></div>
<div class="t" style="left:68px;top:252px;height:18px;line-height:18px;font-size:11.7px;color:#111;font-weight:normal;">Sur</div>
<div style="left:14px;top:279px;width:8px;height:1px;border-top:1px dotted #a0a0a0;"></div>
<div class="t" style="left:44px;top:270px;height:18px;line-height:18px;font-size:11.7px;color:#111;font-weight:normal;">Leyendas</div>
<svg style="position:absolute;left:22px;top:271px;" width="16" height="16" viewBox="0 0 16 16"><rect x="0.7" y="0.7" width="14.8" height="15" rx="1.2" fill="#f4f4f6" stroke="#2e3440" stroke-width="1.3"/><rect x="1.4" y="1.4" width="13.4" height="2.4" fill="#aeb5c2"/><path d="M1 4.2 H15.3" stroke="#2e3440" stroke-width="0.9"/><rect x="2.3" y="5.5" width="3.6" height="3.6" fill="#7a7f88" stroke="#444" stroke-width="0.6"/><circle cx="4.1" cy="11.8" r="1.9" fill="#7a7f88"/><path d="M7 5.9 H13.5 M7 7.9 H13.5 M7 10.7 H13.5 M7 12.8 H13.5" stroke="#555" stroke-width="1" stroke-dasharray="3.5 1"/></svg>
<div style="left:14px;top:297px;width:8px;height:1px;border-top:1px dotted #a0a0a0;"></div>
<div style="left:6px;top:294px;width:9px;height:9px;background:linear-gradient(#fff,#e0e0e0);border:1px solid #9a9a9a;"></div>
<div style="left:8px;top:298px;width:5px;height:1px;background:#2a3a8a;"></div>
<div class="t" style="left:44px;top:288px;height:18px;line-height:18px;font-size:11.7px;color:#111;font-weight:normal;">Tablas de planificación/Cantidades</div>
<svg style="position:absolute;left:22px;top:290px;" width="16" height="14" viewBox="0 0 16 14"><rect x="0.7" y="0.7" width="14" height="11.6" rx="1" fill="#fff" stroke="#2e3440" stroke-width="1.4"/><rect x="1.3" y="1.3" width="12.8" height="1.8" fill="#8a93a3"/><path d="M1 3.6 H14.5 M1 6.6 H14.5 M1 9.4 H14.5" stroke="#2e3440" stroke-width="0.9"/><path d="M4.2 3.6 V12 M7.4 3.6 V12" stroke="#8a8f98" stroke-width="1.1"/></svg>
<div style="left:31px;top:315px;width:14px;height:1px;border-top:1px dotted #a0a0a0;"></div>
<div class="t" style="left:48px;top:306px;height:18px;line-height:18px;font-size:11.7px;color:#111;font-weight:bold;">SyS Protecciones colectivas y Medios auxiliares</div>
<div style="left:31px;top:333px;width:14px;height:1px;border-top:1px dotted #a0a0a0;"></div>
<div class="t" style="left:48px;top:324px;height:18px;line-height:18px;font-size:11.7px;color:#111;font-weight:normal;">SyS Senalizacion</div>
<div style="left:31px;top:351px;width:14px;height:1px;border-top:1px dotted #a0a0a0;"></div>
<div class="t" style="left:48px;top:342px;height:18px;line-height:18px;font-size:11.7px;color:#111;font-weight:normal;">Tabla de planificación de habitaciones</div>
<div style="left:31px;top:369px;width:14px;height:1px;border-top:1px dotted #a0a0a0;"></div>
<div class="t" style="left:48px;top:360px;height:18px;line-height:18px;font-size:11.7px;color:#111;font-weight:normal;">Tabla de planificación de puertas</div>
<div style="left:31px;top:387px;width:14px;height:1px;border-top:1px dotted #a0a0a0;"></div>
<div class="t" style="left:48px;top:378px;height:18px;line-height:18px;font-size:11.7px;color:#111;font-weight:normal;">TRisk</div>
<div style="left:31px;top:405px;width:14px;height:1px;border-top:1px dotted #a0a0a0;"></div>
<div class="t" style="left:48px;top:396px;height:18px;line-height:18px;font-size:11.7px;color:#111;font-weight:normal;">TRisk1</div>
<div style="left:14px;top:423px;width:8px;height:1px;border-top:1px dotted #a0a0a0;"></div>
<div style="left:6px;top:420px;width:9px;height:9px;background:linear-gradient(#fff,#e0e0e0);border:1px solid #9a9a9a;"></div>
<div style="left:8px;top:424px;width:5px;height:1px;background:#2a3a8a;"></div>
<div class="t" style="left:44px;top:414px;height:18px;line-height:18px;font-size:11.7px;color:#111;font-weight:normal;">Planos (todo)</div>
<svg style="position:absolute;left:22px;top:415px;" width="16" height="16" viewBox="0 0 16 16"><path d="M0.7 0.7 H11.5 L15.3 4.5 V12.3 H0.7 Z" fill="#ececec" stroke="#3a3a3a" stroke-width="1.3"/><path d="M11.5 0.7 V4.5 H15.3" fill="none" stroke="#3a3a3a"/><path d="M3 10.5 V4 H10 V7 M6 10.5 V7 H10" fill="none" stroke="#556" stroke-width="1.2"/></svg>
<div style="left:31px;top:441px;width:12px;height:1px;border-top:1px dotted #a0a0a0;"></div>
<div style="left:26px;top:438px;width:9px;height:9px;background:linear-gradient(#fff,#e0e0e0);border:1px solid #9a9a9a;"></div>
<div style="left:28px;top:442px;width:5px;height:1px;background:#2a3a8a;"></div>
<div style="left:30px;top:440px;width:1px;height:5px;background:#2a3a8a;"></div>
<div class="t" style="left:48px;top:432px;height:18px;line-height:18px;font-size:11.7px;color:#111;font-weight:normal;">A101 - SyS</div>
<div style="left:14px;top:459px;width:8px;height:1px;border-top:1px dotted #a0a0a0;"></div>
<div style="left:6px;top:456px;width:9px;height:9px;background:linear-gradient(#fff,#e0e0e0);border:1px solid #9a9a9a;"></div>
<div style="left:8px;top:460px;width:5px;height:1px;background:#2a3a8a;"></div>
<div style="left:10px;top:458px;width:1px;height:5px;background:#2a3a8a;"></div>
<div class="t" style="left:44px;top:450px;height:18px;line-height:18px;font-size:11.7px;color:#111;font-weight:normal;">Familias</div>
<svg style="position:absolute;left:22px;top:451px;" width="16" height="16" viewBox="0 0 16 16"><rect x="1" y="1" width="5.5" height="5.5" fill="#ececec" stroke="#3a3a3a" stroke-width="1.2"/><path d="M9 1 H14 V14 H1 V9 H9 Z" fill="#e6e6e6" stroke="#3a3a3a" stroke-width="1.2"/></svg>
<div style="left:14px;top:477px;width:8px;height:1px;border-top:1px dotted #a0a0a0;"></div>
<div style="left:6px;top:474px;width:9px;height:9px;background:linear-gradient(#fff,#e0e0e0);border:1px solid #9a9a9a;"></div>
<div style="left:8px;top:478px;width:5px;height:1px;background:#2a3a8a;"></div>
<div style="left:10px;top:476px;width:1px;height:5px;background:#2a3a8a;"></div>
<div class="t" style="left:44px;top:468px;height:18px;line-height:18px;font-size:11.7px;color:#111;font-weight:normal;">Grupos</div>
<svg style="position:absolute;left:22px;top:469px;" width="16" height="16" viewBox="0 0 16 16"><path d="M3.5 1 H1 V14.5 H3.5 M12.5 1 H15 V14.5 H12.5" fill="none" stroke="#333" stroke-width="1.2"/><circle cx="7" cy="6.5" r="4" fill="#d8dce2" stroke="#555"/><rect x="6" y="5.5" width="6" height="6.5" rx="1.5" fill="#e4e6ea" stroke="#555" fill-opacity="0.8"/></svg>
<div style="left:14px;top:495px;width:8px;height:1px;border-top:1px dotted #a0a0a0;"></div>
<div style="left:6px;top:492px;width:9px;height:9px;background:linear-gradient(#fff,#e0e0e0);border:1px solid #9a9a9a;"></div>
<div style="left:8px;top:496px;width:5px;height:1px;background:#2a3a8a;"></div>
<div class="t" style="left:44px;top:486px;height:18px;line-height:18px;font-size:11.7px;color:#111;font-weight:normal;">Vínculos de Revit</div>
<svg style="position:absolute;left:22px;top:487px;" width="16" height="16" viewBox="0 0 16 16"><rect x="1" y="5" width="8" height="6" rx="3" fill="none" stroke="#d4a017" stroke-width="2"/><rect x="7" y="5" width="8" height="6" rx="3" fill="none" stroke="#d4a017" stroke-width="2"/><path d="M5 8 H11" stroke="#b8860b" stroke-width="1.5"/></svg>
<div style="left:31px;top:513px;width:12px;height:1px;border-top:1px dotted #a0a0a0;"></div>
<div class="t" style="left:64px;top:504px;height:18px;line-height:18px;font-size:11.7px;color:#111;font-weight:normal;">Proyecto1 estructura.rvt</div>
<svg style="position:absolute;left:43px;top:506px;" width="14" height="14" viewBox="0 0 14 14"><path d="M4 0.5 H10 V6.5 H13.5 L7 13.5 L0.5 6.5 H4 Z" fill="#2b7de0" stroke="#1a5cb0" stroke-width="0.6"/></svg>
</div>
<div style="left:3px;top:814px;width:228px;height:15px;background:#f0f0f0;"></div>
<div style="left:22px;top:814px;width:138px;height:15px;background:#cdcdcd;"></div>
<svg style="position:absolute;left:9px;top:817px;" width="8" height="9" viewBox="0 0 8 9"><path d="M6 1 L2 4.5 L6 8" fill="none" stroke="#444" stroke-width="1.5"/></svg>
<svg style="position:absolute;left:219px;top:817px;" width="8" height="9" viewBox="0 0 8 9"><path d="M2 1 L6 4.5 L2 8" fill="none" stroke="#444" stroke-width="1.5"/></svg>
<div style="left:231px;top:150px;width:2px;height:679px;background:#c4c4c4;"></div>
<div style="left:233px;top:150px;width:1203px;height:21px;background:#cbcbcb;"></div>
<div style="left:491px;top:152px;width:246px;height:19px;background:#f6f6f6;"></div>
<svg style="position:absolute;left:240px;top:157px;" width="16" height="14" viewBox="0 0 16 14"><path d="M1 6 L8 1 L15 5 V11 L8 13.5 L1 11 Z" fill="#dfe3ea" stroke="#8a8f98" stroke-width="1.2"/><path d="M1 6 L8 8.5 L15 5 M8 8.5 V13.5" fill="none" stroke="#8a8f98" stroke-width="1"/><rect x="3" y="8.5" width="2.5" height="3.5" fill="#8a8f98"/></svg>
<div class="t" style="left:264px;top:156.92px;font-size:11.4px;line-height:14.25px;color:#a5a5a5;font-weight:normal;">{3D}</div>
<svg style="position:absolute;left:368px;top:157px;" width="16" height="13" viewBox="0 0 16 13"><rect x="0.6" y="0.6" width="14.8" height="11.8" fill="#f4f4f4" stroke="#8a8f98" stroke-width="1.2"/><path d="M1 3.5 H15" stroke="#8a8f98" stroke-width="1.6"/><path d="M1 6.5 H15 M1 9.5 H15 M4.5 3.5 V12" stroke="#8a8f98" stroke-width="0.9"/></svg>
<div class="t" style="left:391px;top:156.92px;font-size:11.4px;line-height:14.25px;color:#a5a5a5;font-weight:normal;">TRisk1</div>
<svg style="position:absolute;left:496px;top:157px;" width="16" height="13" viewBox="0 0 16 13"><rect x="0.6" y="0.6" width="14.8" height="11.8" fill="#f4f4f4" stroke="#3a4a66" stroke-width="1.2"/><path d="M1 3.5 H15" stroke="#3a4a66" stroke-width="1.6"/><path d="M1 6.5 H15 M1 9.5 H15 M4.5 3.5 V12" stroke="#3a4a66" stroke-width="0.9"/></svg>
<div class="t" style="left:519px;top:156.92px;font-size:11.4px;line-height:14.25px;color:#a5a5a5;font-weight:normal;">SyS Protecciones colectivas y Me...</div>
<svg style="position:absolute;left:722px;top:158px;" width="11" height="11" viewBox="0 0 11 11"><path d="M1 1 L10 10 M10 1 L1 10" stroke="#222" stroke-width="1.8"/></svg>
<div style="left:233px;top:171px;width:1203px;height:658px;background:#efefef;border-left:1px solid #9c9c9c;"></div>
<div style="left:234px;top:171px;width:1202px;height:658px;overflow:hidden;">
<div style="left:3px;top:3px;width:606px;height:40px;background:#fff;border:1px solid #000;"></div>
<div class="t" style="left:3px;top:3px;width:606px;height:40px;line-height:40px;text-align:center;font-size:15.7px;color:#000;padding-top:1px;">&lt;SyS Protecciones colectivas y Medios auxiliares&gt;</div>
<div style="left:3px;top:43px;width:606px;height:16px;background:#eeeeee;"></div>
<div class="t" style="left:3px;top:43px;width:318px;height:16px;line-height:19px;text-align:center;font-size:10.5px;font-weight:bold;color:#000;">A</div>
<div class="t" style="left:321px;top:43px;width:96px;height:16px;line-height:19px;text-align:center;font-size:10.5px;font-weight:bold;color:#000;">B</div>
<div class="t" style="left:417px;top:43px;width:96px;height:16px;line-height:19px;text-align:center;font-size:10.5px;font-weight:bold;color:#000;">C</div>
<div class="t" style="left:559.5px;top:43px;height:16px;line-height:19px;font-size:10.5px;font-weight:bold;color:#000;">D</div>
<div style="left:321px;top:43px;width:1px;height:16px;background:#000;"></div>
<div style="left:417px;top:43px;width:1px;height:16px;background:#000;"></div>
<div style="left:513px;top:43px;width:1px;height:16px;background:#000;"></div>
<div style="left:3px;top:59px;width:606px;height:2px;background:#000;"></div>
<div style="left:3px;top:61px;width:606px;height:14px;background:#fff;"></div>
<div class="t" style="left:539.5px;top:61px;height:14px;line-height:15px;font-size:10.6px;color:#000;">Recursos preventivos</div>
<div class="t" style="left:3px;top:61px;width:318px;height:14px;line-height:15px;text-align:center;font-size:10.6px;color:#000;">Familia</div>
<div class="t" style="left:321px;top:61px;width:96px;height:14px;line-height:15px;text-align:center;font-size:10.6px;color:#000;">Metros lineales</div>
<div class="t" style="left:417px;top:61px;width:96px;height:14px;line-height:15px;text-align:center;font-size:10.6px;color:#000;">U_uds</div>
<div style="left:321px;top:61px;width:1px;height:14px;border-left:1px dotted #000;"></div>
<div style="left:417px;top:61px;width:1px;height:14px;border-left:1px dotted #000;"></div>
<div style="left:513px;top:61px;width:1px;height:14px;border-left:1px dotted #000;"></div>
<div style="left:3px;top:75px;width:606px;height:1px;background:#000;"></div>
<div style="left:3px;top:76px;width:606px;height:15px;background:#cdcdcd;"></div>
<div style="left:3px;top:91px;width:606px;height:16px;background:#fff;"></div>
<div style="left:3px;top:91px;width:606px;height:1px;background:#000;"></div>
<div style="left:321px;top:91px;width:1px;height:16px;border-left:1px dotted #000;"></div>
<div style="left:417px;top:91px;width:1px;height:16px;border-left:1px dotted #000;"></div>
<div style="left:513px;top:91px;width:1px;height:16px;border-left:1px dotted #000;"></div>
<div class="t" style="left:6px;top:90.96px;font-size:10.8px;line-height:16px;color:#000;font-weight:normal;">Acopios</div>
<div class="t" style="left:324px;top:90.96px;font-size:10.8px;line-height:16px;color:#000;font-weight:normal;">0.00</div>
<div class="t" style="left:420px;top:90.96px;font-size:10.8px;line-height:16px;color:#000;font-weight:normal;">0</div>
<div class="t" style="left:516px;top:90.96px;font-size:10.8px;line-height:16px;color:#000;font-weight:normal;">8</div>
<div style="left:3px;top:107px;width:606px;height:32px;background:#cdcdcd;border-top:1px solid #000;"></div>
<div class="t" style="left:6px;top:106.96px;font-size:10.8px;line-height:16px;color:#000;font-weight:normal;">Acopios: 8</div>
<div class="t" style="left:324px;top:106.96px;font-size:10.8px;line-height:16px;color:#000;font-weight:normal;">0.00</div>
<div class="t" style="left:420px;top:106.96px;font-size:10.8px;line-height:16px;color:#000;font-weight:normal;">0</div>
<div style="left:3px;top:139px;width:606px;height:16px;background:#fff;"></div>
<div style="left:3px;top:139px;width:606px;height:1px;background:#000;"></div>
<div style="left:321px;top:139px;width:1px;height:16px;border-left:1px dotted #000;"></div>
<div style="left:417px;top:139px;width:1px;height:16px;border-left:1px dotted #000;"></div>
<div style="left:513px;top:139px;width:1px;height:16px;border-left:1px dotted #000;"></div>
<div class="t" style="left:6px;top:138.96px;font-size:10.8px;line-height:16px;color:#000;font-weight:normal;">AndamiosFachada</div>
<div class="t" style="left:324px;top:138.96px;font-size:10.8px;line-height:16px;color:#000;font-weight:normal;">18.60</div>
<div class="t" style="left:420px;top:138.96px;font-size:10.8px;line-height:16px;color:#000;font-weight:normal;">0</div>
<div class="t" style="left:516px;top:138.96px;font-size:10.8px;line-height:16px;color:#000;font-weight:normal;">1</div>
<div style="left:3px;top:155px;width:606px;height:32px;background:#cdcdcd;border-top:1px solid #000;"></div>
<div class="t" style="left:6px;top:154.96px;font-size:10.8px;line-height:16px;color:#000;font-weight:normal;">AndamiosFachada: 1</div>
<div class="t" style="left:324px;top:154.96px;font-size:10.8px;line-height:16px;color:#000;font-weight:normal;">18.60</div>
<div class="t" style="left:420px;top:154.96px;font-size:10.8px;line-height:16px;color:#000;font-weight:normal;">0</div>
<div style="left:3px;top:187px;width:606px;height:16px;background:#fff;"></div>
<div style="left:3px;top:187px;width:606px;height:1px;background:#000;"></div>
<div style="left:321px;top:187px;width:1px;height:16px;border-left:1px dotted #000;"></div>
<div style="left:417px;top:187px;width:1px;height:16px;border-left:1px dotted #000;"></div>
<div style="left:513px;top:187px;width:1px;height:16px;border-left:1px dotted #000;"></div>
<div class="t" style="left:6px;top:186.96px;font-size:10.8px;line-height:16px;color:#000;font-weight:normal;">Barandilla incorporada al forjado</div>
<div class="t" style="left:324px;top:186.96px;font-size:10.8px;line-height:16px;color:#000;font-weight:normal;">17.92</div>
<div class="t" style="left:420px;top:186.96px;font-size:10.8px;line-height:16px;color:#000;font-weight:normal;">0</div>
<div class="t" style="left:516px;top:186.96px;font-size:10.8px;line-height:16px;color:#000;font-weight:normal;">1</div>
<div style="left:3px;top:203px;width:606px;height:16px;background:#fff;"></div>
<div style="left:3px;top:203px;width:606px;height:1px;border-top:1px dotted #000;"></div>
<div style="left:321px;top:203px;width:1px;height:16px;border-left:1px dotted #000;"></div>
<div style="left:417px;top:203px;width:1px;height:16px;border-left:1px dotted #000;"></div>
<div style="left:513px;top:203px;width:1px;height:16px;border-left:1px dotted #000;"></div>
<div class="t" style="left:6px;top:202.96px;font-size:10.8px;line-height:16px;color:#000;font-weight:normal;">Barandilla incorporada al forjado</div>
<div class="t" style="left:324px;top:202.96px;font-size:10.8px;line-height:16px;color:#000;font-weight:normal;">17.86</div>
<div class="t" style="left:420px;top:202.96px;font-size:10.8px;line-height:16px;color:#000;font-weight:normal;">0</div>
<div class="t" style="left:516px;top:202.96px;font-size:10.8px;line-height:16px;color:#000;font-weight:normal;">1</div>
<div style="left:3px;top:219px;width:606px;height:16px;background:#fff;"></div>
<div style="left:3px;top:219px;width:606px;height:1px;border-top:1px dotted #000;"></div>
<div style="left:321px;top:219px;width:1px;height:16px;border-left:1px dotted #000;"></div>
<div style="left:417px;top:219px;width:1px;height:16px;border-left:1px dotted #000;"></div>
<div style="left:513px;top:219px;width:1px;height:16px;border-left:1px dotted #000;"></div>
<div class="t" style="left:6px;top:218.96px;font-size:10.8px;line-height:16px;color:#000;font-weight:normal;">Barandilla incorporada al forjado</div>
<div class="t" style="left:324px;top:218.96px;font-size:10.8px;line-height:16px;color:#000;font-weight:normal;">16.52</div>
<div class="t" style="left:420px;top:218.96px;font-size:10.8px;line-height:16px;color:#000;font-weight:normal;">0</div>
<div class="t" style="left:516px;top:218.96px;font-size:10.8px;line-height:16px;color:#000;font-weight:normal;">1</div>
<div style="left:3px;top:235px;width:606px;height:16px;background:#fff;"></div>
<div style="left:3px;top:235px;width:606px;height:1px;border-top:1px dotted #000;"></div>
<div style="left:321px;top:235px;width:1px;height:16px;border-left:1px dotted #000;"></div>
<div style="left:417px;top:235px;width:1px;height:16px;border-left:1px dotted #000;"></div>
<div style="left:513px;top:235px;width:1px;height:16px;border-left:1px dotted #000;"></div>
<div class="t" style="left:6px;top:234.96px;font-size:10.8px;line-height:16px;color:#000;font-weight:normal;">Barandilla incorporada al forjado</div>
<div class="t" style="left:324px;top:234.96px;font-size:10.8px;line-height:16px;color:#000;font-weight:normal;">37.20</div>
<div class="t" style="left:420px;top:234.96px;font-size:10.8px;line-height:16px;color:#000;font-weight:normal;">0</div>
<div class="t" style="left:516px;top:234.96px;font-size:10.8px;line-height:16px;color:#000;font-weight:normal;">4</div>
<div style="left:3px;top:251px;width:606px;height:16px;background:#fff;"></div>
<div style="left:3px;top:251px;width:606px;height:1px;border-top:1px dotted #000;"></div>
<div style="left:321px;top:251px;width:1px;height:16px;border-left:1px dotted #000;"></div>
<div style="left:417px;top:251px;width:1px;height:16px;border-left:1px dotted #000;"></div>
<div style="left:513px;top:251px;width:1px;height:16px;border-left:1px dotted #000;"></div>
<div class="t" style="left:6px;top:250.96px;font-size:10.8px;line-height:16px;color:#000;font-weight:normal;">Barandilla incorporada al forjado</div>
<div class="t" style="left:324px;top:250.96px;font-size:10.8px;line-height:16px;color:#000;font-weight:normal;">7.30</div>
<div class="t" style="left:420px;top:250.96px;font-size:10.8px;line-height:16px;color:#000;font-weight:normal;">0</div>
<div class="t" style="left:516px;top:250.96px;font-size:10.8px;line-height:16px;color:#000;font-weight:normal;">1</div>
<div style="left:3px;top:267px;width:606px;height:16px;background:#fff;"></div>
<div style="left:3px;top:267px;width:606px;height:1px;border-top:1px dotted #000;"></div>
<div style="left:321px;top:267px;width:1px;height:16px;border-left:1px dotted #000;"></div>
<div style="left:417px;top:267px;width:1px;height:16px;border-left:1px dotted #000;"></div>
<div style="left:513px;top:267px;width:1px;height:16px;border-left:1px dotted #000;"></div>
<div class="t" style="left:6px;top:266.96px;font-size:10.8px;line-height:16px;color:#000;font-weight:normal;">Barandilla incorporada al forjado</div>
<div class="t" style="left:324px;top:266.96px;font-size:10.8px;line-height:16px;color:#000;font-weight:normal;">6.92</div>
<div class="t" style="left:420px;top:266.96px;font-size:10.8px;line-height:16px;color:#000;font-weight:normal;">0</div>
<div class="t" style="left:516px;top:266.96px;font-size:10.8px;line-height:16px;color:#000;font-weight:normal;">1</div>
<div style="left:3px;top:283px;width:606px;height:16px;background:#fff;"></div>
<div style="left:3px;top:283px;width:606px;height:1px;border-top:1px dotted #000;"></div>
<div style="left:321px;top:283px;width:1px;height:16px;border-left:1px dotted #000;"></div>
<div style="left:417px;top:283px;width:1px;height:16px;border-left:1px dotted #000;"></div>
<div style="left:513px;top:283px;width:1px;height:16px;border-left:1px dotted #000;"></div>
<div class="t" style="left:6px;top:282.96px;font-size:10.8px;line-height:16px;color:#000;font-weight:normal;">Barandilla incorporada al forjado</div>
<div class="t" style="left:324px;top:282.96px;font-size:10.8px;line-height:16px;color:#000;font-weight:normal;">5.60</div>
<div class="t" style="left:420px;top:282.96px;font-size:10.8px;line-height:16px;color:#000;font-weight:normal;">0</div>
<div class="t" style="left:516px;top:282.96px;font-size:10.8px;line-height:16px;color:#000;font-weight:normal;">1</div>
<div style="left:3px;top:299px;width:606px;height:16px;background:#fff;"></div>
<div style="left:3px;top:299px;width:606px;height:1px;border-top:1px dotted #000;"></div>
<div style="left:321px;top:299px;width:1px;height:16px;border-left:1px dotted #000;"></div>
<div style="left:417px;top:299px;width:1px;height:16px;border-left:1px dotted #000;"></div>
<div style="left:513px;top:299px;width:1px;height:16px;border-left:1px dotted #000;"></div>
<div class="t" style="left:6px;top:298.96px;font-size:10.8px;line-height:16px;color:#000;font-weight:normal;">Barandilla incorporada al forjado</div>
<div class="t" style="left:324px;top:298.96px;font-size:10.8px;line-height:16px;color:#000;font-weight:normal;">21.20</div>
<div class="t" style="left:420px;top:298.96px;font-size:10.8px;line-height:16px;color:#000;font-weight:normal;">0</div>
<div class="t" style="left:516px;top:298.96px;font-size:10.8px;line-height:16px;color:#000;font-weight:normal;">4</div>
<div style="left:3px;top:315px;width:606px;height:16px;background:#fff;"></div>
<div style="left:3px;top:315px;width:606px;height:1px;border-top:1px dotted #000;"></div>
<div style="left:321px;top:315px;width:1px;height:16px;border-left:1px dotted #000;"></div>
<div style="left:417px;top:315px;width:1px;height:16px;border-left:1px dotted #000;"></div>
<div style="left:513px;top:315px;width:1px;height:16px;border-left:1px dotted #000;"></div>
<div class="t" style="left:6px;top:314.96px;font-size:10.8px;line-height:16px;color:#000;font-weight:normal;">Barandilla incorporada al forjado</div>
<div class="t" style="left:324px;top:314.96px;font-size:10.8px;line-height:16px;color:#000;font-weight:normal;">5.20</div>
<div class="t" style="left:420px;top:314.96px;font-size:10.8px;line-height:16px;color:#000;font-weight:normal;">0</div>
<div class="t" style="left:516px;top:314.96px;font-size:10.8px;line-height:16px;color:#000;font-weight:normal;">1</div>
<div style="left:3px;top:331px;width:606px;height:16px;background:#fff;"></div>
<div style="left:3px;top:331px;width:606px;height:1px;border-top:1px dotted #000;"></div>
<div style="left:321px;top:331px;width:1px;height:16px;border-left:1px dotted #000;"></div>
<div style="left:417px;top:331px;width:1px;height:16px;border-left:1px dotted #000;"></div>
<div style="left:513px;top:331px;width:1px;height:16px;border-left:1px dotted #000;"></div>
<div class="t" style="left:6px;top:330.96px;font-size:10.8px;line-height:16px;color:#000;font-weight:normal;">Barandilla incorporada al forjado</div>
<div class="t" style="left:324px;top:330.96px;font-size:10.8px;line-height:16px;color:#000;font-weight:normal;">4.40</div>
<div class="t" style="left:420px;top:330.96px;font-size:10.8px;line-height:16px;color:#000;font-weight:normal;">0</div>
<div class="t" style="left:516px;top:330.96px;font-size:10.8px;line-height:16px;color:#000;font-weight:normal;">1</div>
<div style="left:3px;top:347px;width:606px;height:16px;background:#fff;"></div>
<div style="left:3px;top:347px;width:606px;height:1px;border-top:1px dotted #000;"></div>
<div style="left:321px;top:347px;width:1px;height:16px;border-left:1px dotted #000;"></div>
<div style="left:417px;top:347px;width:1px;height:16px;border-left:1px dotted #000;"></div>
<div style="left:513px;top:347px;width:1px;height:16px;border-left:1px dotted #000;"></div>
<div class="t" style="left:6px;top:346.96px;font-size:10.8px;line-height:16px;color:#000;font-weight:normal;">Barandilla incorporada al forjado</div>
<div class="t" style="left:324px;top:346.96px;font-size:10.8px;line-height:16px;color:#000;font-weight:normal;">4.24</div>
<div class="t" style="left:420px;top:346.96px;font-size:10.8px;line-height:16px;color:#000;font-weight:normal;">0</div>
<div class="t" style="left:516px;top:346.96px;font-size:10.8px;line-height:16px;color:#000;font-weight:normal;">1</div>
<div style="left:3px;top:363px;width:606px;height:16px;background:#fff;"></div>
<div style="left:3px;top:363px;width:606px;height:1px;border-top:1px dotted #000;"></div>
<div style="left:321px;top:363px;width:1px;height:16px;border-left:1px dotted #000;"></div>
<div style="left:417px;top:363px;width:1px;height:16px;border-left:1px dotted #000;"></div>
<div style="left:513px;top:363px;width:1px;height:16px;border-left:1px dotted #000;"></div>
<div class="t" style="left:6px;top:362.96px;font-size:10.8px;line-height:16px;color:#000;font-weight:normal;">Barandilla incorporada al forjado</div>
<div class="t" style="left:324px;top:362.96px;font-size:10.8px;line-height:16px;color:#000;font-weight:normal;">3.40</div>
<div class="t" style="left:420px;top:362.96px;font-size:10.8px;line-height:16px;color:#000;font-weight:normal;">0</div>
<div class="t" style="left:516px;top:362.96px;font-size:10.8px;line-height:16px;color:#000;font-weight:normal;">2</div>
<div style="left:3px;top:379px;width:606px;height:16px;background:#fff;"></div>
<div style="left:3px;top:379px;width:606px;height:1px;border-top:1px dotted #000;"></div>
<div style="left:321px;top:379px;width:1px;height:16px;border-left:1px dotted #000;"></div>
<div style="left:417px;top:379px;width:1px;height:16px;border-left:1px dotted #000;"></div>
<div style="left:513px;top:379px;width:1px;height:16px;border-left:1px dotted #000;"></div>
<div class="t" style="left:6px;top:378.96px;font-size:10.8px;line-height:16px;color:#000;font-weight:normal;">Barandilla incorporada al forjado</div>
<div class="t" style="left:324px;top:378.96px;font-size:10.8px;line-height:16px;color:#000;font-weight:normal;">1.63</div>
<div class="t" style="left:420px;top:378.96px;font-size:10.8px;line-height:16px;color:#000;font-weight:normal;">0</div>
<div class="t" style="left:516px;top:378.96px;font-size:10.8px;line-height:16px;color:#000;font-weight:normal;">1</div>
<div style="left:3px;top:395px;width:606px;height:16px;background:#fff;"></div>
<div style="left:3px;top:395px;width:606px;height:1px;border-top:1px dotted #000;"></div>
<div style="left:321px;top:395px;width:1px;height:16px;border-left:1px dotted #000;"></div>
<div style="left:417px;top:395px;width:1px;height:16px;border-left:1px dotted #000;"></div>
<div style="left:513px;top:395px;width:1px;height:16px;border-left:1px dotted #000;"></div>
<div class="t" style="left:6px;top:394.96px;font-size:10.8px;line-height:16px;color:#000;font-weight:normal;">Barandilla incorporada al forjado</div>
<div class="t" style="left:324px;top:394.96px;font-size:10.8px;line-height:16px;color:#000;font-weight:normal;">1.60</div>
<div class="t" style="left:420px;top:394.96px;font-size:10.8px;line-height:16px;color:#000;font-weight:normal;">0</div>
<div class="t" style="left:516px;top:394.96px;font-size:10.8px;line-height:16px;color:#000;font-weight:normal;">1</div>
<div style="left:3px;top:411px;width:606px;height:32px;background:#cdcdcd;border-top:1px solid #000;"></div>
<div class="t" style="left:6px;top:410.96px;font-size:10.8px;line-height:16px;color:#000;font-weight:normal;">Barandilla incorporada al forjado: 21</div>
<div class="t" style="left:324px;top:410.96px;font-size:10.8px;line-height:16px;color:#000;font-weight:normal;">151.00</div>
<div class="t" style="left:420px;top:410.96px;font-size:10.8px;line-height:16px;color:#000;font-weight:normal;">0</div>
<div style="left:3px;top:443px;width:606px;height:16px;background:#fff;"></div>
<div style="left:3px;top:443px;width:606px;height:1px;background:#000;"></div>
<div style="left:321px;top:443px;width:1px;height:16px;border-left:1px dotted #000;"></div>
<div style="left:417px;top:443px;width:1px;height:16px;border-left:1px dotted #000;"></div>
<div style="left:513px;top:443px;width:1px;height:16px;border-left:1px dotted #000;"></div>
<div class="t" style="left:6px;top:442.96px;font-size:10.8px;line-height:16px;color:#000;font-weight:normal;">Barandilla tipo sargento de mordaza</div>
<div class="t" style="left:324px;top:442.96px;font-size:10.8px;line-height:16px;color:#000;font-weight:normal;">18.60</div>
<div class="t" style="left:420px;top:442.96px;font-size:10.8px;line-height:16px;color:#000;font-weight:normal;">0</div>
<div class="t" style="left:516px;top:442.96px;font-size:10.8px;line-height:16px;color:#000;font-weight:normal;">1</div>
<div style="left:3px;top:459px;width:606px;height:16px;background:#fff;"></div>
<div style="left:3px;top:459px;width:606px;height:1px;border-top:1px dotted #000;"></div>
<div style="left:321px;top:459px;width:1px;height:16px;border-left:1px dotted #000;"></div>
<div style="left:417px;top:459px;width:1px;height:16px;border-left:1px dotted #000;"></div>
<div style="left:513px;top:459px;width:1px;height:16px;border-left:1px dotted #000;"></div>
<div class="t" style="left:6px;top:458.96px;font-size:10.8px;line-height:16px;color:#000;font-weight:normal;">Barandilla tipo sargento de mordaza</div>
<div class="t" style="left:324px;top:458.96px;font-size:10.8px;line-height:16px;color:#000;font-weight:normal;">17.30</div>
<div class="t" style="left:420px;top:458.96px;font-size:10.8px;line-height:16px;color:#000;font-weight:normal;">0</div>
<div class="t" style="left:516px;top:458.96px;font-size:10.8px;line-height:16px;color:#000;font-weight:normal;">1</div>
<div style="left:3px;top:475px;width:606px;height:16px;background:#fff;"></div>
<div style="left:3px;top:475px;width:606px;height:1px;border-top:1px dotted #000;"></div>
<div style="left:321px;top:475px;width:1px;height:16px;border-left:1px dotted #000;"></div>
<div style="left:417px;top:475px;width:1px;height:16px;border-left:1px dotted #000;"></div>
<div style="left:513px;top:475px;width:1px;height:16px;border-left:1px dotted #000;"></div>
<div class="t" style="left:6px;top:474.96px;font-size:10.8px;line-height:16px;color:#000;font-weight:normal;">Barandilla tipo sargento de mordaza</div>
<div class="t" style="left:324px;top:474.96px;font-size:10.8px;line-height:16px;color:#000;font-weight:normal;">7.00</div>
<div class="t" style="left:420px;top:474.96px;font-size:10.8px;line-height:16px;color:#000;font-weight:normal;">0</div>
<div class="t" style="left:516px;top:474.96px;font-size:10.8px;line-height:16px;color:#000;font-weight:normal;">1</div>
<div style="left:3px;top:491px;width:606px;height:16px;background:#fff;"></div>
<div style="left:3px;top:491px;width:606px;height:1px;border-top:1px dotted #000;"></div>
<div style="left:321px;top:491px;width:1px;height:16px;border-left:1px dotted #000;"></div>
<div style="left:417px;top:491px;width:1px;height:16px;border-left:1px dotted #000;"></div>
<div style="left:513px;top:491px;width:1px;height:16px;border-left:1px dotted #000;"></div>
<div class="t" style="left:6px;top:490.96px;font-size:10.8px;line-height:16px;color:#000;font-weight:normal;">Barandilla tipo sargento de mordaza</div>
<div class="t" style="left:324px;top:490.96px;font-size:10.8px;line-height:16px;color:#000;font-weight:normal;">5.30</div>
<div class="t" style="left:420px;top:490.96px;font-size:10.8px;line-height:16px;color:#000;font-weight:normal;">0</div>
<div class="t" style="left:516px;top:490.96px;font-size:10.8px;line-height:16px;color:#000;font-weight:normal;">1</div>
<div style="left:3px;top:507px;width:606px;height:16px;background:#fff;"></div>
<div style="left:3px;top:507px;width:606px;height:1px;border-top:1px dotted #000;"></div>
<div style="left:321px;top:507px;width:1px;height:16px;border-left:1px dotted #000;"></div>
<div style="left:417px;top:507px;width:1px;height:16px;border-left:1px dotted #000;"></div>
<div style="left:513px;top:507px;width:1px;height:16px;border-left:1px dotted #000;"></div>
<div class="t" style="left:6px;top:506.96px;font-size:10.8px;line-height:16px;color:#000;font-weight:normal;">Barandilla tipo sargento de mordaza</div>
<div class="t" style="left:324px;top:506.96px;font-size:10.8px;line-height:16px;color:#000;font-weight:normal;">5.00</div>
<div class="t" style="left:420px;top:506.96px;font-size:10.8px;line-height:16px;color:#000;font-weight:normal;">0</div>
<div class="t" style="left:516px;top:506.96px;font-size:10.8px;line-height:16px;color:#000;font-weight:normal;">1</div>
<div style="left:3px;top:523px;width:606px;height:16px;background:#fff;"></div>
<div style="left:3px;top:523px;width:606px;height:1px;border-top:1px dotted #000;"></div>
<div style="left:321px;top:523px;width:1px;height:16px;border-left:1px dotted #000;"></div>
<div style="left:417px;top:523px;width:1px;height:16px;border-left:1px dotted #000;"></div>
<div style="left:513px;top:523px;width:1px;height:16px;border-left:1px dotted #000;"></div>
<div class="t" style="left:6px;top:522.96px;font-size:10.8px;line-height:16px;color:#000;font-weight:normal;">Barandilla tipo sargento de mordaza</div>
<div class="t" style="left:324px;top:522.96px;font-size:10.8px;line-height:16px;color:#000;font-weight:normal;">3.40</div>
<div class="t" style="left:420px;top:522.96px;font-size:10.8px;line-height:16px;color:#000;font-weight:normal;">0</div>
<div class="t" style="left:516px;top:522.96px;font-size:10.8px;line-height:16px;color:#000;font-weight:normal;">2</div>
<div style="left:3px;top:539px;width:606px;height:32px;background:#cdcdcd;border-top:1px solid #000;"></div>
<div class="t" style="left:6px;top:538.96px;font-size:10.8px;line-height:16px;color:#000;font-weight:normal;">Barandilla tipo sargento de mordaza: 7</div>
<div class="t" style="left:324px;top:538.96px;font-size:10.8px;line-height:16px;color:#000;font-weight:normal;">56.60</div>
<div class="t" style="left:420px;top:538.96px;font-size:10.8px;line-height:16px;color:#000;font-weight:normal;">0</div>
<div style="left:3px;top:571px;width:606px;height:16px;background:#fff;"></div>
<div style="left:3px;top:571px;width:606px;height:1px;background:#000;"></div>
<div style="left:321px;top:571px;width:1px;height:16px;border-left:1px dotted #000;"></div>
<div style="left:417px;top:571px;width:1px;height:16px;border-left:1px dotted #000;"></div>
<div style="left:513px;top:571px;width:1px;height:16px;border-left:1px dotted #000;"></div>
<div class="t" style="left:6px;top:570.96px;font-size:10.8px;line-height:16px;color:#000;font-weight:normal;">Cierre Chapa galvanizada</div>
<div class="t" style="left:324px;top:570.96px;font-size:10.8px;line-height:16px;color:#000;font-weight:normal;">30.01</div>
<div class="t" style="left:420px;top:570.96px;font-size:10.8px;line-height:16px;color:#000;font-weight:normal;">0</div>
<div class="t" style="left:516px;top:570.96px;font-size:10.8px;line-height:16px;color:#000;font-weight:normal;">1</div>
<div style="left:3px;top:587px;width:606px;height:16px;background:#fff;"></div>
<div style="left:3px;top:587px;width:606px;height:1px;border-top:1px dotted #000;"></div>
<div style="left:321px;top:587px;width:1px;height:16px;border-left:1px dotted #000;"></div>
<div style="left:417px;top:587px;width:1px;height:16px;border-left:1px dotted #000;"></div>
<div style="left:513px;top:587px;width:1px;height:16px;border-left:1px dotted #000;"></div>
<div class="t" style="left:6px;top:586.96px;font-size:10.8px;line-height:16px;color:#000;font-weight:normal;">Cierre Chapa galvanizada</div>
<div class="t" style="left:324px;top:586.96px;font-size:10.8px;line-height:16px;color:#000;font-weight:normal;">54.62</div>
<div class="t" style="left:420px;top:586.96px;font-size:10.8px;line-height:16px;color:#000;font-weight:normal;">0</div>
<div class="t" style="left:516px;top:586.96px;font-size:10.8px;line-height:16px;color:#000;font-weight:normal;">2</div>
<div style="left:3px;top:603px;width:606px;height:16px;background:#fff;"></div>
<div style="left:3px;top:603px;width:606px;height:1px;border-top:1px dotted #000;"></div>
<div style="left:321px;top:603px;width:1px;height:16px;border-left:1px dotted #000;"></div>
<div style="left:417px;top:603px;width:1px;height:16px;border-left:1px dotted #000;"></div>
<div style="left:513px;top:603px;width:1px;height:16px;border-left:1px dotted #000;"></div>
<div class="t" style="left:6px;top:602.96px;font-size:10.8px;line-height:16px;color:#000;font-weight:normal;">Cierre Chapa galvanizada</div>
<div class="t" style="left:324px;top:602.96px;font-size:10.8px;line-height:16px;color:#000;font-weight:normal;">15.50</div>
<div class="t" style="left:420px;top:602.96px;font-size:10.8px;line-height:16px;color:#000;font-weight:normal;">0</div>
<div class="t" style="left:516px;top:602.96px;font-size:10.8px;line-height:16px;color:#000;font-weight:normal;">1</div>
<div style="left:3px;top:619px;width:606px;height:16px;background:#fff;"></div>
<div style="left:3px;top:619px;width:606px;height:1px;border-top:1px dotted #000;"></div>
<div style="left:321px;top:619px;width:1px;height:16px;border-left:1px dotted #000;"></div>
<div style="left:417px;top:619px;width:1px;height:16px;border-left:1px dotted #000;"></div>
<div style="left:513px;top:619px;width:1px;height:16px;border-left:1px dotted #000;"></div>
<div class="t" style="left:6px;top:618.96px;font-size:10.8px;line-height:16px;color:#000;font-weight:normal;">Cierre Chapa galvanizada</div>
<div class="t" style="left:324px;top:618.96px;font-size:10.8px;line-height:16px;color:#000;font-weight:normal;">6.38</div>
<div class="t" style="left:420px;top:618.96px;font-size:10.8px;line-height:16px;color:#000;font-weight:normal;">0</div>
<div class="t" style="left:516px;top:618.96px;font-size:10.8px;line-height:16px;color:#000;font-weight:normal;">1</div>
<div style="left:3px;top:635px;width:606px;height:16px;background:#fff;"></div>
<div style="left:3px;top:635px;width:606px;height:1px;border-top:1px dotted #000;"></div>
<div style="left:321px;top:635px;width:1px;height:16px;border-left:1px dotted #000;"></div>
<div style="left:417px;top:635px;width:1px;height:16px;border-left:1px dotted #000;"></div>
<div style="left:513px;top:635px;width:1px;height:16px;border-left:1px dotted #000;"></div>
<div class="t" style="left:6px;top:634.96px;font-size:10.8px;line-height:16px;color:#000;font-weight:normal;">Cierre Chapa galvanizada</div>
<div class="t" style="left:324px;top:634.96px;font-size:10.8px;line-height:16px;color:#000;font-weight:normal;">3.10</div>
<div class="t" style="left:420px;top:634.96px;font-size:10.8px;line-height:16px;color:#000;font-weight:normal;">0</div>
<div class="t" style="left:516px;top:634.96px;font-size:10.8px;line-height:16px;color:#000;font-weight:normal;">1</div>
<div style="left:3px;top:651px;width:606px;height:32px;background:#cdcdcd;border-top:1px solid #000;"></div>
<div class="t" style="left:6px;top:650.96px;font-size:10.8px;line-height:16px;color:#000;font-weight:normal;">Cierre Chapa galvanizada: 6</div>
<div class="t" style="left:324px;top:650.96px;font-size:10.8px;line-height:16px;color:#000;font-weight:normal;">180.61</div>
<div class="t" style="left:420px;top:650.96px;font-size:10.8px;line-height:16px;color:#000;font-weight:normal;">0</div>
<div style="left:3px;top:59px;width:1px;height:640px;background:#000;"></div>
</div>
<div style="left:3px;top:830px;width:1430px;height:1px;background:#f4f4f4;"></div>
<div style="left:3px;top:831px;width:1430px;height:26px;background:#e3edd6;"></div>
<div class="t" style="left:12px;top:836.20px;font-size:12.15px;line-height:15.19px;color:#222;font-weight:normal;">Modificar tabla de planificación/cantidades</div>
<div style="left:285px;top:835px;width:1px;height:20px;background:#a8a8a8;"></div>
<div style="left:296px;top:833px;width:42px;height:20px;background:#d3d3d3;border:1px solid #c2c2c2;"></div>
<div class="t" style="left:300px;top:835.84px;font-size:12px;line-height:15.0px;color:#9e9e9e;font-weight:normal;">Nueva</div>
<div style="left:346px;top:833px;width:52px;height:20px;background:#d3d3d3;border:1px solid #c2c2c2;"></div>
<div class="t" style="left:350px;top:835.84px;font-size:12px;line-height:15.0px;color:#9e9e9e;font-weight:normal;">Suprimir</div>
<div style="left:0px;top:857px;width:1433px;height:26px;background:#cdcdcd;"></div>
<div class="t" style="left:5px;top:862.58px;font-size:11.75px;line-height:14.69px;color:#1a1a1a;font-weight:normal;width:334px;overflow:hidden;">Amplíe o reduzca la vista con la tecla Ctrl + rueda del ratón o Ct</div>
<svg style="position:absolute;left:345px;top:862px;" width="17" height="17" viewBox="0 0 17 17"><rect x="1" y="6" width="6" height="10" fill="#bbb" stroke="#999"/><rect x="9" y="3" width="7" height="13" fill="#ccc" stroke="#999"/><circle cx="8" cy="4" r="3" fill="#aaa"/></svg>
<div style="left:369px;top:861px;width:204px;height:18px;background:#fff;"></div>
<div style="left:555px;top:862px;width:1px;height:16px;background:#efefef;"></div>
<svg style="position:absolute;left:560px;top:867px;" width="10" height="6" viewBox="0 0 10 6"><path d="M1 1 L5 5 L9 1" fill="none" stroke="#888" stroke-width="1.2"/></svg>
<svg style="position:absolute;left:583px;top:862px;" width="14" height="16" viewBox="0 0 14 16"><path d="M3 2 H12 V7 H7 V11 M4 11 H9 M5 11 L2 15" fill="none" stroke="#9a9a9a" stroke-width="2"/></svg>
<div class="t" style="left:601.5px;top:863.34px;font-size:12px;line-height:15.0px;color:#111;font-weight:normal;">:0</div>
<div style="left:636px;top:862px;width:15px;height:16px;background:#a8a8a8;border-radius:2px;"></div>
<svg style="position:absolute;left:660px;top:862px;" width="17" height="16" viewBox="0 0 17 16"><rect x="4" y="1" width="12" height="14" fill="none" stroke="#999" stroke-width="1.5"/><path d="M1 9 H9 M6 6 L9 9 L6 12" fill="none" stroke="#888" stroke-width="1.5"/></svg>
<div style="left:686px;top:861px;width:203px;height:18px;background:#fff;"></div>
<div class="t" style="left:688px;top:863.54px;font-size:11.8px;line-height:14.75px;color:#737373;font-weight:normal;">Modelo base</div>
<div style="left:871px;top:862px;width:1px;height:16px;background:#efefef;"></div>
<svg style="position:absolute;left:875px;top:867px;" width="10" height="6" viewBox="0 0 10 6"><path d="M1 1 L5 5 L9 1" fill="none" stroke="#888" stroke-width="1.2"/></svg>
<svg style="position:absolute;left:1118px;top:861px;" width="19" height="19" viewBox="0 0 19 19"><path d="M2 4.5 C2 2.5 3.5 1.5 5.5 1.5 H13.5 C15.5 1.5 17 2.5 17 4.5 C17 7 15.5 8.5 13.5 8.5 H12 V14 H7 V8.5 H5.5 C3.5 8.5 2 7 2 4.5 Z" fill="#8f8f8f"/><circle cx="5.6" cy="4.7" r="1.2" fill="#d8d8d8"/><circle cx="13.6" cy="4.7" r="1.2" fill="#d8d8d8"/><path d="M7 12.5 H12 M8 15.5 V17.5 M11 15.5 V17.5" stroke="#dcdcdc" stroke-width="1.2" stroke-dasharray="1.5 1"/><path d="M7.5 15 H12" stroke="#8f8f8f" stroke-width="2.5"/></svg>
<svg style="position:absolute;left:1145px;top:861px;" width="18" height="19" viewBox="0 0 18 19"><path d="M1.5 15 L10 5 L15.5 1.5 V17 H1.5 Z" fill="#8f8f8f"/><path d="M15 2 V17 M2 17 H15" stroke="#dcdcdc" stroke-width="1.1" stroke-dasharray="1.3 1.3"/></svg>
<svg style="position:absolute;left:1171px;top:861px;" width="19" height="19" viewBox="0 0 19 19"><path d="M1.5 6.5 H4 V1.5 H11 V6.5 H15 L17.5 11 V16 H1.5 Z" fill="#8f8f8f"/><path d="M2 12 H9 M12 12 L15 15 M5 16 V18 M9 16 V18 M13 16 V18" stroke="#dcdcdc" stroke-width="1.1" stroke-dasharray="1.3 1"/></svg>
<svg style="position:absolute;left:1198px;top:861px;" width="18" height="19" viewBox="0 0 18 19"><path d="M1.5 5 L8 2.5 L15.5 1.5 V17 H1.5 Z" fill="#8f8f8f"/><path d="M13 2.5 L16 6 M15 8 V17 M3 16.5 H15" stroke="#dcdcdc" stroke-width="1.1" stroke-dasharray="1.3 1.2"/></svg>
<svg style="position:absolute;left:1224px;top:861px;" width="18" height="19" viewBox="0 0 18 19"><path d="M1 5 H8 M4.5 1.5 V8.5 M3 2.5 L7 7 M7 2.5 L3 7" stroke="#a9a9a9" stroke-width="1" stroke-dasharray="1.2 0.8"/><path d="M9 7 V17 L11.5 14.5 L13.5 18 L15 17 L13 13.5 H16.5 Z" fill="#c4c4c4" stroke="#9a9a9a" stroke-width="0.9"/></svg>
<svg style="position:absolute;left:1250px;top:861px;" width="17" height="17" viewBox="0 0 17 17"><circle cx="8.5" cy="8.5" r="5.6" fill="none" stroke="#a8a8a8" stroke-width="2" stroke-dasharray="1.7 1.4"/></svg>
<svg style="position:absolute;left:1271px;top:860px;" width="19" height="19" viewBox="0 0 19 19"><defs><linearGradient id="fg" x1="0" x2="1"><stop offset="0" stop-color="#c8c8c8"/><stop offset="0.5" stop-color="#f4f4f4"/><stop offset="1" stop-color="#9c9c9c"/></linearGradient></defs><path d="M1 1.5 H17.5 L11 9 V17.5 H7.5 V9 Z" fill="url(#fg)" stroke="#3c3c3c" stroke-width="1.2"/></svg>
<div class="t" style="left:1289px;top:863.34px;font-size:12px;line-height:15.0px;color:#222;font-weight:normal;">:0</div>
<div style="left:1366px;top:861px;width:1px;height:20px;background:#bdbdbd;"></div>
<div class="t" style="left:1369px;top:863.34px;font-size:12px;line-height:15.0px;color:#222;font-weight:normal;">100%</div>
<div style="left:1410px;top:861px;width:1px;height:20px;background:#bdbdbd;"></div>
<div style="left:0px;top:883px;width:1433px;height:7px;background:#d6d6d6;"></div>
<div style="left:0px;top:883px;width:47px;height:7px;background:linear-gradient(90deg,#5e5a4c,#8a8676 40%,#6a6a5a 70%,#c8c8c0);"></div>
<div style="left:47px;top:883px;width:108px;height:7px;background:#fafafa;"></div>
<div style="left:82px;top:884px;width:12px;height:6px;background:#ecd68e;border:1px solid #d8c070;"></div>
<div class="t" style="left:101px;top:884.86px;font-size:12.5px;line-height:15.62px;color:#111;font-weight:bold;">hopelete</div>
<div style="left:155px;top:883px;width:3px;height:7px;background:#555;"></div>
<div style="left:160px;top:883px;width:7px;height:7px;background:#c4d4e8;"></div>
<div style="left:178px;top:884px;width:95px;height:4px;background:#bdbdbd;"></div>
<div style="left:320px;top:884px;width:1px;height:6px;background:#888;"></div>
<div style="left:690px;top:883px;width:1px;height:7px;background:#333;"></div>
<div style="left:691px;top:883px;width:537px;height:7px;background:linear-gradient(#e6ecf4,#b8c8dc);"></div>
<div style="left:1228px;top:883px;width:2px;height:7px;background:#333;"></div>
<div style="left:1230px;top:883px;width:25px;height:7px;background:#bdbdbd;"></div>
<div style="left:1255px;top:883px;width:2px;height:7px;background:#555;"></div>
<div style="left:1262px;top:883px;width:171px;height:7px;background:#d8dcd0;"></div>
<div style="left:798px;top:49px;width:785px;height:793px;background:#fff;border:1px solid #6f6f6f;border-right:none;border-top:none;box-shadow:-4px 2px 14px rgba(0,0,0,0.28);"></div>
<div style="left:798px;top:49px;width:638px;height:1px;background:#5a5a5a;"></div>
<div style="left:1491px;top:49px;width:92px;height:1px;background:#5a5a5a;"></div>
<svg style="position:absolute;left:806px;top:55px;" width="18" height="18" viewBox="0 0 18 18"><rect x="10.3" y="3.5" width="6" height="12.5" fill="#eeeeee"/><path d="M10.5 3.3 H16.7 V16 H10.5" fill="none" stroke="#aaa" stroke-width="0.8"/><path d="M16.7 3.3 V16" stroke="#2f3436" stroke-width="1.6"/><path d="M1 3.3 H5 L6 2.5 H9.3 L9.6 1 L13 5.6 L8.6 10.8 L7.6 9.6 L9.8 6.1 H1 Z" fill="#1c6cb0"/><path d="M1 7.3 H9.3 L6 13 L9.7 17.3 L7.3 16.5 H2.5 C1.5 16.5 1 16 1 15 Z" fill="#1c6cb0"/><path d="M16.6 11.8 H9.5" stroke="#2f3436" stroke-width="2"/><path d="M12.5 8.4 L8.6 11.8 L12.5 15.2" fill="none" stroke="#2f3436" stroke-width="2"/></svg>
<div class="t" style="left:828px;top:57.64px;font-size:11.7px;line-height:14.62px;color:#111;font-weight:normal;">Export/ImportExcel 21.0.0.0</div>
<svg style="position:absolute;left:1562px;top:59px;" width="11" height="11" viewBox="0 0 11 11"><path d="M0.5 0.5 L10.5 10.5 M10.5 0.5 L0.5 10.5" stroke="#111" stroke-width="1.1"/></svg>
<div style="left:799px;top:80px;width:784px;height:46px;background:#d9d9d9;"></div>
<div style="left:801px;top:82px;width:391px;height:44px;background:#94bde0;border:1.5px solid #000;border-bottom:none;border-radius:7px 7px 0 0;"></div>
<div style="left:1191px;top:82px;width:392px;height:44px;background:#b6d5f4;border:1.5px solid #000;border-bottom:none;border-radius:7px 7px 0 0;"></div>
<div class="t" style="left:801px;top:82px;width:391px;height:43px;line-height:43px;text-align:center;font-size:32.5px;font-weight:bold;color:#3b3b3b;transform:scaleX(0.905);padding-left:1px;">EXPORTAR</div>
<div class="t" style="left:1191px;top:82px;width:392px;height:43px;line-height:43px;text-align:center;font-size:32.5px;font-weight:bold;color:#3b3b3b;transform:scaleX(0.957);padding-left:0px;">IMPORTAR</div>
<div style="left:801px;top:125px;width:782px;height:1px;background:#a9b4be;"></div>
<div style="left:799px;top:126px;width:784px;height:675px;background:#94bde0;border-top:1px solid #b6d5f4;"></div>
<div style="left:806px;top:145px;width:379px;height:527px;border:1px solid #000;border-radius:3px;box-shadow:0 0 0 1px rgba(255,255,255,0.85), inset 0 0 0 1px rgba(255,255,255,0.85);"></div>
<div style="left:812.7px;top:143px;width:177px;height:5px;background:#94bde0;"></div>
<div class="t" style="left:814.7px;top:135.77px;font-size:16.5px;line-height:20.62px;color:#111;font-weight:normal;letter-spacing:0.6px;">Eventos programados</div>
<div style="left:1197px;top:145px;width:379px;height:527px;border:1px solid #000;border-radius:3px;box-shadow:0 0 0 1px rgba(255,255,255,0.85), inset 0 0 0 1px rgba(255,255,255,0.85);"></div>
<div style="left:1203.7px;top:143px;width:81px;height:5px;background:#94bde0;"></div>
<div class="t" style="left:1205.7px;top:136.06px;font-size:16.2px;line-height:20.25px;color:#111;font-weight:normal;letter-spacing:0.45px;">Standards</div>
<div style="left:806px;top:698px;width:770px;height:96px;border:1px solid #000;border-radius:3px;box-shadow:0 0 0 1px rgba(255,255,255,0.85), inset 0 0 0 1px rgba(255,255,255,0.85);"></div>
<div style="left:812.7px;top:696px;width:179px;height:5px;background:#94bde0;"></div>
<div class="t" style="left:814.7px;top:687.69px;font-size:17.2px;line-height:21.5px;color:#111;font-weight:normal;letter-spacing:0.5px;">Modo de exportación:</div>
<div style="left:811px;top:156px;width:369px;height:511px;background:#eef2fa;border:1px solid #a8a8a8;border-top:none;"></div>
<div style="left:811px;top:156px;width:369px;height:25px;background:linear-gradient(#0e77b9,#2f77ba 50%,#5577b8);"></div>
<div style="left:819px;top:162px;width:14px;height:13px;background:#fff;border:1px solid #6a6a6a;"></div>
<div class="t" style="left:839.5px;top:162.80px;font-size:14.1px;line-height:17.62px;color:#fff;font-weight:bold;">Name</div>
<div style="left:819px;top:186.2px;width:14px;height:12.8px;background:#fff;border:1px solid #5a5a5a;"></div>
<div class="t" style="left:838.6px;top:186.93px;font-size:13.45px;line-height:16.81px;color:#111;font-weight:normal;">SyS Protecciones colectivas y Medios auxiliares</div>
<div style="left:819px;top:208.0px;width:14px;height:12.8px;background:#fff;border:1px solid #5a5a5a;"></div>
<div class="t" style="left:838.6px;top:208.73px;font-size:13.45px;line-height:16.81px;color:#111;font-weight:normal;">SyS Senalizacion</div>
<div style="left:819px;top:229.8px;width:14px;height:12.8px;background:#fff;border:1px solid #5a5a5a;"></div>
<div class="t" style="left:838.6px;top:230.53px;font-size:13.45px;line-height:16.81px;color:#111;font-weight:normal;">Tabla de planificación de habitaciones</div>
<div style="left:819px;top:251.6px;width:14px;height:12.8px;background:#fff;border:1px solid #5a5a5a;"></div>
<div class="t" style="left:838.6px;top:252.33px;font-size:13.45px;line-height:16.81px;color:#111;font-weight:normal;">Tabla de planificación de puertas</div>
<div style="left:819px;top:273.4px;width:14px;height:12.8px;background:#fff;border:1px solid #5a5a5a;"></div>
<div class="t" style="left:838.6px;top:274.13px;font-size:13.45px;line-height:16.81px;color:#111;font-weight:normal;">TRisk</div>
<div style="left:819px;top:295.2px;width:14px;height:12.8px;background:#fff;border:1px solid #5a5a5a;"></div>
<div class="t" style="left:838.6px;top:295.93px;font-size:13.45px;line-height:16.81px;color:#111;font-weight:normal;">TRisk1</div>
<svg style="position:absolute;left:820px;top:186px;" width="13" height="12" viewBox="0 0 13 12"><path d="M2.5 6 L5.5 9.5 L11.5 1.5" fill="none" stroke="#111" stroke-width="2"/></svg>
<div style="left:832px;top:185px;width:294px;height:18px;border:1px dotted #333;"></div>
<div style="left:1202px;top:156px;width:369px;height:511px;background:#eef2fa;border:1px solid #a8a8a8;border-top:none;"></div>
<div style="left:1202px;top:156px;width:369px;height:25px;background:linear-gradient(#0e77b9,#2f77ba 50%,#5577b8);"></div>
<div style="left:1210px;top:162px;width:14px;height:13px;background:#fff;border:1px solid #6a6a6a;"></div>
<div class="t" style="left:1230.5px;top:162.80px;font-size:14.1px;line-height:17.62px;color:#fff;font-weight:bold;">Name</div>
<div style="left:1210px;top:186.2px;width:14px;height:12.8px;background:#fff;border:1px solid #5a5a5a;"></div>
<div class="t" style="left:1229.6px;top:186.93px;font-size:13.45px;line-height:16.81px;color:#111;font-weight:normal;">Line Styles</div>
<div style="left:1210px;top:208.0px;width:14px;height:12.8px;background:#fff;border:1px solid #5a5a5a;"></div>
<div class="t" style="left:1229.6px;top:208.73px;font-size:13.45px;line-height:16.81px;color:#111;font-weight:normal;">Object Styles</div>
<div style="left:1210px;top:229.8px;width:14px;height:12.8px;background:#fff;border:1px solid #5a5a5a;"></div>
<div class="t" style="left:1229.6px;top:230.53px;font-size:13.45px;line-height:16.81px;color:#111;font-weight:normal;">Family Listing</div>
<div style="left:1210px;top:251.6px;width:14px;height:12.8px;background:#fff;border:1px solid #5a5a5a;"></div>
<div class="t" style="left:1229.6px;top:252.33px;font-size:13.45px;line-height:16.81px;color:#111;font-weight:normal;">Shared Parameters Settings</div>
<div style="left:1210px;top:273.4px;width:14px;height:12.8px;background:#fff;border:1px solid #5a5a5a;"></div>
<div class="t" style="left:1229.6px;top:274.13px;font-size:13.45px;line-height:16.81px;color:#111;font-weight:normal;">Project Parameters Settings</div>
<div style="left:1210px;top:295.2px;width:14px;height:12.8px;background:#fff;border:1px solid #5a5a5a;"></div>
<div class="t" style="left:1229.6px;top:295.93px;font-size:13.45px;line-height:16.81px;color:#111;font-weight:normal;">Project Information</div>
<div style="left:812px;top:723.5px;width:12px;height:12px;border-radius:50%;background:#fff;border:1px solid #555;"></div>
<div style="left:812px;top:763px;width:12px;height:12px;border-radius:50%;background:#fff;border:1px solid #555;"></div>
<div style="left:815px;top:766px;width:6px;height:6px;border-radius:50%;background:#111;"></div>
<svg style="position:absolute;left:836px;top:719px;" width="23" height="20" viewBox="0 0 23 20"><path d="M1 10 H19 M11 2 L19 10 L11 18" fill="none" stroke="#174c88" stroke-width="4" stroke-linejoin="miter"/></svg>
<svg style="position:absolute;left:827px;top:754px;" width="38" height="30" viewBox="0 0 38 30"><path d="M14 11 H33 M25 3 L33 11 L25 19" fill="none" stroke="#174c88" stroke-width="4"/><path d="M24 18 H5 M13 10 L5 18 L13 26" fill="none" stroke="#174c88" stroke-width="4"/></svg>
<div class="t" style="left:876.8px;top:720.32px;font-size:16.14px;line-height:20.18px;color:#111;font-weight:normal;">Unidireccional: Exporta mantienendo el formato pero no permite luego importarlo.</div>
<div class="t" style="left:876.8px;top:761.07px;font-size:15.88px;line-height:19.85px;color:#111;font-weight:normal;">Bidireccional: Exporta manteniendo el formato e Importa las posibles modificaciones.</div>
<div style="left:799px;top:801px;width:784px;height:40px;background:#fff;"></div>
<div style="left:1448px;top:801px;width:125px;height:40px;background:#dddddd;border:1px solid #adadad;"></div>
<svg style="position:absolute;left:1472px;top:810px;" width="24" height="22" viewBox="0 0 24 22"><path d="M11.5 1 L4 8.5 L6.5 11 L9.8 7.7 V17 H13.2 V7.7 L16.5 11 L19 8.5 Z" fill="#174c88"/><rect x="1" y="16" width="22" height="5" fill="#174c88"/><rect x="3" y="17.8" width="1.5" height="1.5" fill="#fff"/><rect x="6" y="17.8" width="1.5" height="1.5" fill="#fff"/></svg>
<div class="t" style="left:1501px;top:813.49px;font-size:13.9px;line-height:17.38px;color:#111;font-weight:bold;">Export</div>
<div style="left:798px;top:841px;width:785px;height:1px;background:#555;"></div>
<div style="left:1436px;top:0px;width:55px;height:49px;background:#fff;"></div>
<div style="left:1491px;top:0px;width:92px;height:33px;background:#fff;"></div>
<div style="left:1491px;top:33px;width:92px;height:16px;background:linear-gradient(#fff,#dcdcdc);"></div>
<div style="left:1433px;top:42px;width:3px;height:7px;border-left:1px solid #777;border-top:1px solid #777;background:#eee;"></div>
<div style="left:1435px;top:11px;width:1px;height:31px;background:#e0306a;"></div>
<div style="left:1433px;top:842px;width:150px;height:48px;background:#fff;"></div>
<div style="left:1582px;top:80px;width:1px;height:721px;background:#a0a0a0;"></div>
</body></html>
